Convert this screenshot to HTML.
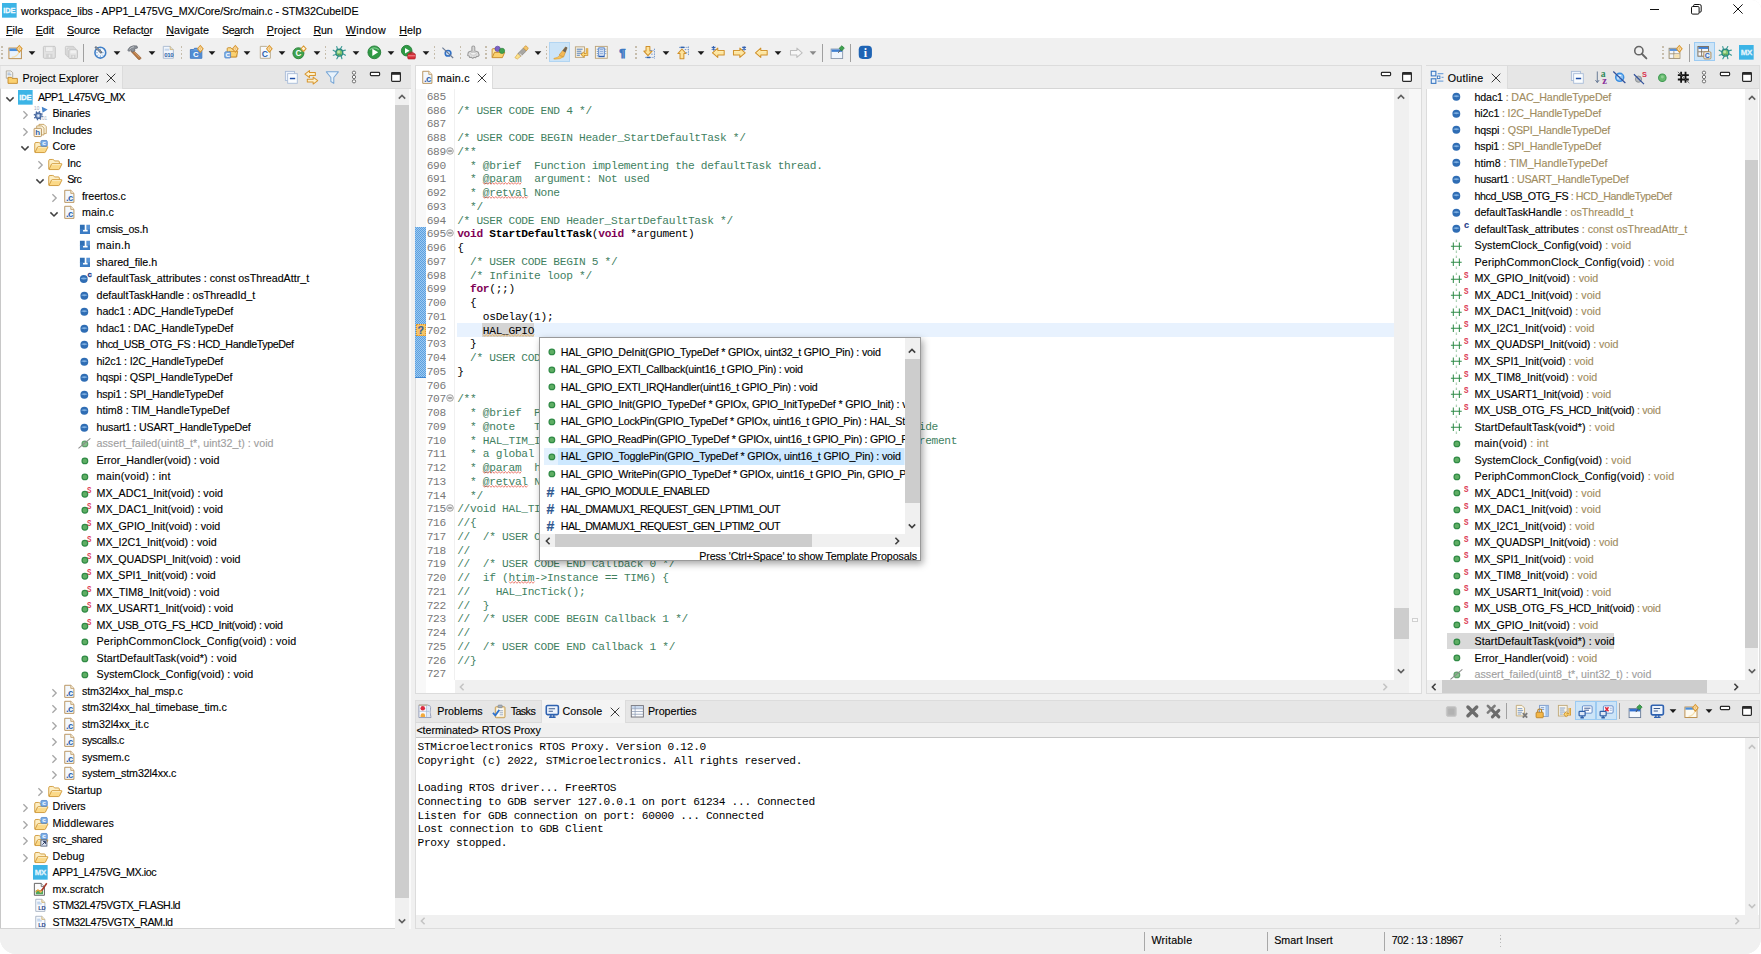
<!DOCTYPE html>
<html lang="en"><head><meta charset="utf-8"><title>workspace_libs - APP1_L475VG_MX/Core/Src/main.c - STM32CubeIDE</title>
<style>
html,body{margin:0;padding:0;background:#fff;}
body{width:1761px;height:954px;overflow:hidden;position:relative;font-family:"Liberation Sans",sans-serif;}
#win{position:absolute;left:0;top:0;width:1761px;height:954px;overflow:hidden;background:#f0f0f0;border-radius:0 9px 16px 16px;}
#win div,#win span,#win svg{position:absolute;}
#win svg{overflow:visible;}
#win span span{position:static;}
.t{font-family:"Liberation Sans",sans-serif;line-height:16px;white-space:pre;-webkit-text-stroke:0.13px currentColor;}
.m{font-family:"Liberation Mono",monospace;font-size:11.2px;letter-spacing:-0.3033px;line-height:14px;white-space:pre;color:#000;}
.m b{font-weight:bold;}
.c{color:#3f7f5f;}
.k{color:#7f0055;font-weight:bold;}
.sq{text-decoration:underline wavy #e0301e 0.8px;text-underline-offset:1.5px;}

</style></head>
<body>
<div id="win">
<div style="left:0.00px;top:0.00px;width:1761.00px;height:38.00px;background:#fff;"></div>
<svg style="left:1.97px;top:2.97px;" width="14.67" height="14.67" viewBox="0 0 16 16"><rect width="16" height="16" fill="#3cb4e6"/><text x="8" y="10.9" font-size="8.1" font-weight="bold" fill="#f2fafe" text-anchor="middle" font-family="Liberation Sans, sans-serif" letter-spacing="-0.1" stroke="#f2fafe" stroke-width="0.35">IDE</text></svg>
<span id="t0" class="t " style="left:21.10px;top:3.20px;color:#000;font-size:10.7px;letter-spacing:-0.097px;">workspace_libs - APP1_L475VG_MX/Core/Src/main.c - STM32CubeIDE</span>
<svg style="left:1649px;top:4px" width="12" height="12" viewBox="0 0 12 12"><path d="M1 5.5 H10" stroke="#111" stroke-width="1"/></svg>
<svg style="left:1690px;top:3px" width="13" height="13" viewBox="0 0 13 13"><rect x="1.5" y="3.5" width="7.6" height="7.6" rx="1.2" fill="none" stroke="#111" stroke-width="1"/><path d="M3.6 3.3 V2.6 Q3.6 1.5 4.8 1.5 H9.6 Q11.2 1.5 11.2 3.1 V8 Q11.2 9.2 10.1 9.2 H9.3" fill="none" stroke="#111" stroke-width="1"/></svg>
<svg style="left:1732.00px;top:3.40px" width="12" height="12" viewBox="-6 -6 12 12"><path d="M-4.6 -4.6 L4.6 4.6 M4.6 -4.6 L-4.6 4.6" fill="none" stroke="#111" stroke-width="1.0"/></svg>
<span id="t1" class="t " style="left:6.10px;top:22.00px;color:#000;font-size:10.7px;letter-spacing:-0.034px;text-underline-offset:1px;"><u>F</u>ile</span>
<span id="t2" class="t " style="left:35.80px;top:22.00px;color:#000;font-size:10.7px;letter-spacing:-0.109px;text-underline-offset:1px;"><u>E</u>dit</span>
<span id="t3" class="t " style="left:67.10px;top:22.00px;color:#000;font-size:10.7px;letter-spacing:-0.198px;text-underline-offset:1px;"><u>S</u>ource</span>
<span id="t4" class="t " style="left:113.10px;top:22.00px;color:#000;font-size:10.7px;letter-spacing:-0.063px;text-underline-offset:1px;">Refact<u>o</u>r</span>
<span id="t5" class="t " style="left:166.30px;top:22.00px;color:#000;font-size:10.7px;letter-spacing:0.052px;text-underline-offset:1px;"><u>N</u>avigate</span>
<span id="t6" class="t " style="left:222.10px;top:22.00px;color:#000;font-size:10.7px;letter-spacing:-0.415px;text-underline-offset:1px;">Se<u>a</u>rch</span>
<span id="t7" class="t " style="left:266.80px;top:22.00px;color:#000;font-size:10.7px;letter-spacing:0.060px;text-underline-offset:1px;"><u>P</u>roject</span>
<span id="t8" class="t " style="left:313.50px;top:22.00px;color:#000;font-size:10.7px;letter-spacing:-0.203px;text-underline-offset:1px;"><u>R</u>un</span>
<span id="t9" class="t " style="left:345.80px;top:22.00px;color:#000;font-size:10.7px;letter-spacing:0.361px;text-underline-offset:1px;"><u>W</u>indow</span>
<span id="t10" class="t " style="left:399.30px;top:22.00px;color:#000;font-size:10.7px;letter-spacing:0.054px;text-underline-offset:1px;"><u>H</u>elp</span>
<div style="left:0.00px;top:38.00px;width:1761.00px;height:27.50px;background:#f0f0f0;"></div>
<div style="left:1.40px;top:46.00px;width:1.60px;height:1.60px;background:#c6bdac;"></div>
<div style="left:1.40px;top:49.64px;width:1.60px;height:1.60px;background:#c6bdac;"></div>
<div style="left:1.40px;top:53.28px;width:1.60px;height:1.60px;background:#c6bdac;"></div>
<div style="left:1.40px;top:56.92px;width:1.60px;height:1.60px;background:#c6bdac;"></div>
<div style="left:549.00px;top:42.30px;width:21.40px;height:19.60px;background:#cce4f7;border:1px solid #b2d5f2;box-sizing:border-box;"></div>
<div style="left:1694.00px;top:42.10px;width:21.20px;height:19.40px;background:#cce4f7;border:1px solid #9ccbf2;box-sizing:border-box;"></div>
<svg style="left:8.36px;top:44.87px;" width="14.67" height="14.67" viewBox="0 0 16 16"><rect x="1" y="3.3" width="13.6" height="11.6" fill="#eaf3fc" stroke="#b98a46" stroke-width="1"/><rect x="1.5" y="3.8" width="12.6" height="2.8" fill="#4a8fdc"/><path d="M4 13.5 Q10 13 12.5 7" stroke="#f5dfae" stroke-width="1.4" fill="none"/><path d="M12.4 0.6 L15.4 4.2 L12.4 7.8 L9.4 4.2Z" fill="#fff3d6" stroke="#d9962f" stroke-width="1.1"/><path d="M12.4 2.2 V6.2 M10.9 4.2 H13.9" stroke="#f0b858" stroke-width="0.8"/></svg>
<svg style="left:42.06px;top:44.87px;" width="14.67" height="14.67" viewBox="0 0 16 16"><path d="M1.5 2.6 Q1.5 1.5 2.6 1.5 H13.4 Q14.5 1.5 14.5 2.6 V13.4 Q14.5 14.5 13.4 14.5 H2.6 Q1.5 14.5 1.5 13.4Z" fill="#e2e2e2" stroke="#c2c2c2"/><rect x="4" y="2" width="8" height="5.2" fill="#f1f1f1" stroke="#cdcdcd" stroke-width=".6"/><rect x="4.6" y="9.6" width="6.8" height="4.6" fill="#d2d2d2"/><rect x="7.4" y="10.6" width="1.6" height="2.8" fill="#efefef"/></svg>
<svg style="left:63.87px;top:44.87px;" width="14.67" height="14.67" viewBox="0 0 16 16"><rect x="1.5" y="1.5" width="9.5" height="9.5" rx="1" fill="#e6e6e6" stroke="#c6c6c6"/><rect x="3.3" y="3.3" width="9.5" height="9.5" rx="1" fill="#e6e6e6" stroke="#c6c6c6"/><rect x="5.2" y="5.2" width="9.5" height="9.5" rx="1" fill="#e2e2e2" stroke="#c2c2c2"/><rect x="7" y="5.8" width="6" height="3.4" fill="#f1f1f1"/><rect x="7.6" y="11" width="4.8" height="3.4" fill="#d0d0d0"/><rect x="9.4" y="11.6" width="1.3" height="2.2" fill="#efefef"/></svg>
<svg style="left:92.67px;top:44.87px;" width="14.67" height="14.67" viewBox="0 0 16 16"><circle cx="8" cy="8.4" r="5.9" fill="#f4f8fc" stroke="#3f7fc8" stroke-width="1.7"/><path d="M8 4 V8.4 H11.6" stroke="#7aa7d8" stroke-width="1" fill="none"/><path d="M8 12.9 V11.4 M3.6 8.4 H5 M4.9 11.6 L5.9 10.6 M11.1 11.6 L10.1 10.6" stroke="#5d92cf" stroke-width="1"/><path d="M2.4 2 L9.4 8.6" stroke="#5a6472" stroke-width="2.3"/><path d="M2.8 2.4 L8.6 7.9" stroke="#b9c4d2" stroke-width="0.9"/></svg>
<svg style="left:127.27px;top:44.87px;" width="14.67" height="14.67" viewBox="0 0 16 16"><path d="M6.2 5.2 L15 13.6 Q15.6 14.8 14.4 15.6 L12.6 15.8 L4.4 7Z" fill="#b87a44" stroke="#8a5226" stroke-width=".7"/><path d="M7 6.6 L13.6 13.4" stroke="#d9a878" stroke-width=".9"/><path d="M0.8 5.6 Q2.4 1.4 7 0.8 L10.8 1 L11.6 3.2 L8 4.4 L8.8 6 L5.6 7.8 L4.2 5.4 L2 7Z" fill="#8a8f96" stroke="#5e636a" stroke-width=".7"/><path d="M2.8 4.6 Q4.4 2.4 7.6 1.9" stroke="#c9cdd2" stroke-width=".9" fill="none"/></svg>
<svg style="left:161.36px;top:44.87px;" width="14.67" height="14.67" viewBox="0 0 16 16"><path d="M2.5 1.5 H10 L13.5 5 V14.5 H2.5Z" fill="#f1f6fc" stroke="#a9b9cf" stroke-width="1"/><path d="M10 1.5 V5 H13.5" fill="#e6dcc4" stroke="#c7a96a" stroke-width=".8"/><rect x="4" y="4" width="5" height="2.2" fill="#c5d6ec"/><text x="8.4" y="13" font-size="6.6" font-weight="bold" fill="#2d5fa8" text-anchor="middle" font-family="Liberation Sans, sans-serif" letter-spacing="-0.4">010</text></svg>
<svg style="left:188.66px;top:44.87px;" width="14.67" height="14.67" viewBox="0 0 16 16"><path d="M1.5 5 H5 L6 3.6 H9.6 L10.4 5 H14 V14.5 H1.5Z" fill="#6ea2df" stroke="#3a74bd" stroke-width="1"/><path d="M2 6 H13.5 V14 H2Z" fill="#4f8bd3"/><text x="7.4" y="13" font-size="8.4" font-weight="bold" fill="#fff" text-anchor="middle" font-family="Liberation Sans, sans-serif" >C</text><path d="M12.4 0.6 L15.4 4.2 L12.4 7.8 L9.4 4.2Z" fill="#fff3d6" stroke="#d9962f" stroke-width="1.1"/><path d="M12.4 2.2 V6.2 M10.9 4.2 H13.9" stroke="#f0b858" stroke-width="0.8"/></svg>
<svg style="left:223.66px;top:44.87px;" width="14.67" height="14.67" viewBox="0 0 16 16"><path d="M3.5 13 V4 Q3.5 3 4.5 3 H7.6 L9 4.6 H14 V13Z" fill="#fbdc8c" stroke="#c58a2a" stroke-width="1"/><path d="M3.6 13 L5.6 7 H15 L13.4 13Z" fill="#fbd170" stroke="#c58a2a" stroke-width=".9"/><rect x="0.8" y="7.4" width="6.4" height="6.8" rx="1" fill="#7eaee6" stroke="#4a80c6" stroke-width=".8"/><text x="4" y="13.2" font-size="6.8" font-weight="bold" fill="#fff" text-anchor="middle" font-family="Liberation Sans, sans-serif" >C</text><path d="M12.4 0.6 L15.4 4.2 L12.4 7.8 L9.4 4.2Z" fill="#fff3d6" stroke="#d9962f" stroke-width="1.1"/><path d="M12.4 2.2 V6.2 M10.9 4.2 H13.9" stroke="#f0b858" stroke-width="0.8"/></svg>
<svg style="left:258.37px;top:44.87px;" width="14.67" height="14.67" viewBox="0 0 16 16"><path d="M2.5 1.5 H9.5 L13.5 5.5 V14.5 H2.5Z" fill="#f5f9fe" stroke="#b9a988" stroke-width="1"/><text x="7.6" y="12.8" font-size="9.4" font-weight="bold" fill="#2f63ae" text-anchor="middle" font-family="Liberation Sans, sans-serif" >C</text><path d="M12.4 0.6 L15.4 4.2 L12.4 7.8 L9.4 4.2Z" fill="#fff3d6" stroke="#d9962f" stroke-width="1.1"/><path d="M12.4 2.2 V6.2 M10.9 4.2 H13.9" stroke="#f0b858" stroke-width="0.8"/></svg>
<svg style="left:292.27px;top:44.87px;" width="14.67" height="14.67" viewBox="0 0 16 16"><circle cx="7" cy="9" r="6" fill="#3fa24e" stroke="#2b7f3a" stroke-width="1"/><text x="7" y="12.2" font-size="9" font-weight="bold" fill="#fff" text-anchor="middle" font-family="Liberation Sans, sans-serif" >C</text><path d="M12.6 1 L15.4 4 L12.6 7 L9.8 4Z" fill="#fff3d6" stroke="#d9962f" stroke-width="1.1"/></svg>
<svg style="left:332.27px;top:44.87px;" width="14.67" height="14.67" viewBox="0 0 16 16"><path d="M10.9 9.0 L14.7 11.1 M9.7 10.9 L10.8 15.0 M7.4 11.3 L5.3 15.1 M5.5 10.1 L1.4 11.2 M5.1 7.8 L1.3 5.7 M6.3 5.9 L5.2 1.8 M8.6 5.5 L10.7 1.7 M10.5 6.7 L14.6 5.6" stroke="#3a9a94" stroke-width="1.25" fill="none" stroke-linecap="round"/><circle cx="8" cy="8.4" r="3.7" fill="#86c66e" stroke="#2a8a84" stroke-width="1.5"/><circle cx="7.2" cy="7.6" r="1.5" fill="#c4e6b0"/><path d="M6.2 10.2 Q8 11.4 9.8 10" stroke="#3a8a54" stroke-width=".8" fill="none"/></svg>
<svg style="left:366.87px;top:44.87px;" width="14.67" height="14.67" viewBox="0 0 16 16"><circle cx="8" cy="8" r="7" fill="#2f9a45" stroke="#1f7a34" stroke-width=".9"/><path d="M3 5.2 Q8 1 13 5.2" stroke="#79c98a" stroke-width="1.3" fill="none"/><path d="M5.8 4 L12.2 8 L5.8 12Z" fill="#fff"/></svg>
<svg style="left:401.27px;top:44.87px;" width="14.67" height="14.67" viewBox="0 0 16 16"><circle cx="6.2" cy="6.2" r="5.8" fill="#2f9a45" stroke="#1f7a34" stroke-width=".9"/><path d="M4.4 3.2 L9.4 6.2 L4.4 9.2Z" fill="#fff"/><rect x="7.4" y="9.4" width="8.2" height="5.8" rx="1" fill="#d8303a" stroke="#b01e28" stroke-width=".8"/><path d="M9.8 9.2 V7.9 H13.2 V9.2" fill="none" stroke="#b01e28" stroke-width="1"/><path d="M7.6 11.8 H15.4" stroke="#f5a0a6" stroke-width=".9"/></svg>
<svg style="left:440.47px;top:44.87px;" width="14.67" height="14.67" viewBox="0 0 16 16"><circle cx="8.8" cy="9" r="3.1" fill="#cfe2f8" stroke="#2f6fc4" stroke-width="1.7"/><path d="M2.6 2.8 L14.4 14.2" stroke="#6a7a94" stroke-width="1.2"/></svg>
<svg style="left:466.06px;top:44.87px;" width="14.67" height="14.67" viewBox="0 0 16 16"><path d="M2.2 9.6 Q2 7.4 5 6.8 L6.4 6.6 V2.6 Q6.4 1 8 1 Q9.6 1 9.6 2.6 V6.6 L11 6.8 Q14 7.4 13.8 9.6 L14.4 11 L13 12.6 L11.6 12.2 L10.6 13.8 L8.8 13.4 L7.4 14.6 L5.8 13.4 L4 13.6 L3.4 12 L1.8 11.4Z" fill="#e2e2e2" stroke="#9c9c9c" stroke-width="1.15" stroke-linejoin="round"/><path d="M6.4 6.6 Q8 7.6 9.6 6.6 M7.4 2.4 V6.4" stroke="#b4b4b4" stroke-width=".8" fill="none"/><ellipse cx="8" cy="9.6" rx="3.4" ry="1.5" fill="#f2f2f2" stroke="#b4b4b4" stroke-width=".7"/></svg>
<svg style="left:491.27px;top:44.87px;" width="14.67" height="14.67" viewBox="0 0 16 16"><path d="M1.2 13.6 V5 Q1.2 4 2.2 4 H5.2 L6.6 5.6 H12.4 V8" fill="#fbe6a8" stroke="#c58a2a" stroke-width="1"/><path d="M1.3 13.8 L3.8 8 H15 L12.4 13.8Z" fill="#fbd170" stroke="#c58a2a" stroke-width="1" stroke-linejoin="round"/><circle cx="7.2" cy="4.2" r="2.9" fill="#7b62c6" stroke="#56409e" stroke-width=".7"/><circle cx="12" cy="6.4" r="2.9" fill="#3fa24e" stroke="#2b7f3a" stroke-width=".7"/></svg>
<svg style="left:513.66px;top:44.87px;" width="14.67" height="14.67" viewBox="0 0 16 16"><path d="M1 13.8 L3.6 15.4 L7.6 12 L4.6 9Z" fill="#fbe18c" stroke="#d9a63a" stroke-width=".7"/><path d="M4.4 9.2 L10.4 3.2 L13.6 6.4 L7.6 12.2Z" fill="#a8a6a2" stroke="#7d7a76" stroke-width=".7"/><path d="M10.2 3.2 L12.2 1.2 Q13 .6 13.8 1.4 L15.2 3 Q15.8 3.8 15 4.6 L13.4 6.4Z" fill="#f3c56a" stroke="#c58a2a" stroke-width=".7"/><path d="M6 9.4 L8.8 12" stroke="#ded9d0" stroke-width="1.2"/></svg>
<svg style="left:552.66px;top:44.87px;" width="14.67" height="14.67" viewBox="0 0 16 16"><path d="M1 14.6 Q5 14 7.4 11.6 L11.2 13 Q8 15.8 1 15.4Z" fill="#f9c55c" stroke="#d99a2e" stroke-width=".6"/><path d="M6.6 11 L13.6 2.2 L15.4 3.2 L11.6 13Z" fill="#f3b956" stroke="#c98a26" stroke-width=".6"/><path d="M10.4 6.2 L13.8 1.8 L15.6 2.8 L13.6 8.2Z" fill="#6d6358"/></svg>
<svg style="left:574.06px;top:44.87px;" width="14.67" height="14.67" viewBox="0 0 16 16"><rect x="1.5" y="2" width="10" height="11.5" fill="#f6f1e4" stroke="#b9a27a" stroke-width="1"/><path d="M3 4.6 H9.4 M3 6.8 H8 M3 9 H9.4 M3 11.2 H6.4" stroke="#4a78b8" stroke-width="1"/><path d="M14.2 3.6 V10.4 H9.4 M11.4 8 L9 10.4 L11.4 12.8" fill="none" stroke="#c98a26" stroke-width="2.6"/><path d="M14.2 3.6 V10.4 H9.4 M11.4 8 L9 10.4 L11.4 12.8" fill="none" stroke="#fbd878" stroke-width="1.1"/></svg>
<svg style="left:594.06px;top:44.87px;" width="14.67" height="14.67" viewBox="0 0 16 16"><rect x="1.5" y="1.5" width="13" height="13" fill="#f8f5ec" stroke="#b9a27a" stroke-width="1"/><rect x="5.2" y="3.2" width="6" height="9.6" fill="#f4f8fe" stroke="#3f74c4" stroke-width="1"/><path d="M3 4.6 H4.4 M3 7 H4.4 M3 9.4 H4.4 M3 11.8 H4.4 M12.2 4.6 H13.4 M12.2 7 H13.4 M12.2 9.4 H13.4 M6.4 5.2 H10 M6.4 7.4 H10 M6.4 9.6 H10" stroke="#5a86c6" stroke-width=".9"/><path d="M5.4 12.4 H11" stroke="#2f5fb0" stroke-width="1.4"/></svg>
<svg style="left:614.96px;top:44.87px;" width="14.67" height="14.67" viewBox="0 0 16 16"><text x="8" y="12.6" font-size="12.4" font-weight="bold" fill="#3b78c2" text-anchor="middle" font-family="Liberation Sans, sans-serif" stroke="#3b78c2" stroke-width="0.7">¶</text></svg>
<svg style="left:641.66px;top:44.87px;" width="14.67" height="14.67" viewBox="0 0 16 16"><path d="M4.4 1.6 H8.6 V6.6 H11 L6.5 11.6 L2 6.6 H4.4Z" fill="#fde29a" stroke="#d0902a" stroke-width="1.1" stroke-linejoin="round"/><path d="M13.6 4 V15 M9 6 H12.6 M10 10 H12.6 M3.4 13.6 H12.6" stroke="#5a86c6" stroke-width=".9" stroke-dasharray="1.6 1"/><path d="M5 13.6 H9" stroke="#2f63ae" stroke-width="1.6"/></svg>
<svg style="left:676.26px;top:44.87px;" width="14.67" height="14.67" viewBox="0 0 16 16"><path d="M4.4 15 H8.6 V9.4 H11 L6.5 4.4 L2 9.4 H4.4Z" fill="#fde29a" stroke="#d0902a" stroke-width="1.1" stroke-linejoin="round"/><path d="M13.6 1.6 V12 M9.6 5 H12.6 M10.6 8.4 H12.6 M3.4 2.6 H12.6" stroke="#5a86c6" stroke-width=".9" stroke-dasharray="1.6 1"/><path d="M5 2.6 H9" stroke="#2f63ae" stroke-width="1.6"/></svg>
<svg style="left:711.16px;top:44.87px;" width="14.67" height="14.67" viewBox="0 0 16 16"><path d="M7.4 3.4 V6 H14.4 V11 H7.4 V13.6 L1.6 8.5Z" fill="#fde6a2" stroke="#d0902a" stroke-width="1.1" stroke-linejoin="round"/><path d="M7 5.6 L3.6 8.4 M8 7 H13.4" stroke="#fdeeb8" stroke-width=".9" fill="none"/><path d="M2.8 1.2 V6 M0.8 2.2 L4.8 5 M4.8 2.2 L0.8 5" stroke="#2f5fb0" stroke-width="1.1"/></svg>
<svg style="left:731.66px;top:44.87px;" width="14.67" height="14.67" viewBox="0 0 16 16"><path d="M8.6 3.4 V6 H1.6 V11 H8.6 V13.6 L14.4 8.5Z" fill="#fde6a2" stroke="#d0902a" stroke-width="1.1" stroke-linejoin="round"/><path d="M2.6 7 H9" stroke="#fdeeb8" stroke-width=".9" fill="none"/><path d="M13.2 1.2 V6 M11.2 2.2 L15.2 5 M15.2 2.2 L11.2 5" stroke="#2f5fb0" stroke-width="1.1"/></svg>
<svg style="left:753.87px;top:44.87px;" width="14.67" height="14.67" viewBox="0 0 16 16"><path d="M7.4 3.4 V6 H14.4 V11 H7.4 V13.6 L1.6 8.5Z" fill="#fde6a2" stroke="#d0902a" stroke-width="1.1" stroke-linejoin="round"/><path d="M7 5.6 L3.6 8.4 M8 7 H13.4" stroke="#fdeeb8" stroke-width=".9" fill="none"/></svg>
<svg style="left:788.87px;top:44.87px;" width="14.67" height="14.67" viewBox="0 0 16 16"><path d="M8.6 3.4 V6 H1.6 V11 H8.6 V13.6 L14.4 8.5Z" fill="#f7f7f7" stroke="#bdbdbd" stroke-width="1.1" stroke-linejoin="round"/></svg>
<svg style="left:829.76px;top:44.87px;" width="14.67" height="14.67" viewBox="0 0 16 16"><rect x="1.2" y="4.4" width="12.6" height="10.4" fill="#eef5fd" stroke="#8a98ac" stroke-width="1"/><rect x="1.7" y="4.9" width="11.6" height="2.6" fill="#3f7fd0"/><path d="M9 8.6 L11.6 5.2" stroke="#5a5a5a" stroke-width="1"/><path d="M10 3.6 L13 0.8 L15.6 3.4 L12.8 6.4Z" fill="#3fa24e" stroke="#237a36" stroke-width=".8"/></svg>
<svg style="left:858.46px;top:44.87px;" width="14.67" height="14.67" viewBox="0 0 16 16"><rect x="0.8" y="0.8" width="14.4" height="14.4" rx="4.2" fill="#1f64b4"/><text x="8" y="12.6" font-size="13" font-weight="bold" fill="#fff" text-anchor="middle" font-family="Liberation Serif, serif" >i</text></svg>
<svg style="left:1632.66px;top:44.87px;" width="14.67" height="14.67" viewBox="0 0 16 16"><circle cx="6.4" cy="6.2" r="4.5" fill="none" stroke="#666" stroke-width="1.7"/><path d="M9.6 9.6 L14.6 14.6" stroke="#666" stroke-width="2.1" stroke-linecap="round"/></svg>
<svg style="left:1667.87px;top:44.87px;" width="14.67" height="14.67" viewBox="0 0 16 16"><rect x="1.2" y="3.6" width="11.8" height="11" fill="#f4f6fa" stroke="#9a8a6a" stroke-width="1"/><rect x="1.7" y="4.1" width="10.8" height="2.4" fill="#5a93dc"/><path d="M1.6 9.6 H12.6 M6.4 6.6 V14.4" stroke="#9a8a6a" stroke-width=".9"/><rect x="7" y="10.2" width="5.4" height="3.8" fill="#f8e2b0"/><path d="M12.4 0.6 L15.4 4.2 L12.4 7.8 L9.4 4.2Z" fill="#fff3d6" stroke="#d9962f" stroke-width="1.1"/><path d="M12.4 2.2 V6.2 M10.9 4.2 H13.9" stroke="#f0b858" stroke-width="0.8"/></svg>
<svg style="left:1697.26px;top:44.87px;" width="14.67" height="14.67" viewBox="0 0 16 16"><rect x="1" y="1.6" width="11.6" height="10.6" fill="#f4f6fa" stroke="#7a6a54" stroke-width="1"/><rect x="1.5" y="2.1" width="10.6" height="2.2" fill="#3f7fd0"/><path d="M1.4 7.4 H12.2 M5 4.4 V12" stroke="#7a6a54" stroke-width=".9"/><rect x="7.4" y="7.4" width="7.8" height="7.8" rx="1.2" fill="#e4ecf8" stroke="#b08a4a" stroke-width="1"/><text x="11.3" y="14.2" font-size="7.6" font-weight="bold" fill="#2f63ae" text-anchor="middle" font-family="Liberation Sans, sans-serif" >C</text></svg>
<svg style="left:1718.46px;top:44.87px;" width="14.67" height="14.67" viewBox="0 0 16 16"><path d="M10.9 9.0 L14.7 11.1 M9.7 10.9 L10.8 15.0 M7.4 11.3 L5.3 15.1 M5.5 10.1 L1.4 11.2 M5.1 7.8 L1.3 5.7 M6.3 5.9 L5.2 1.8 M8.6 5.5 L10.7 1.7 M10.5 6.7 L14.6 5.6" stroke="#3a9a94" stroke-width="1.25" fill="none" stroke-linecap="round"/><circle cx="8" cy="8.4" r="3.7" fill="#86c66e" stroke="#2a8a84" stroke-width="1.5"/><circle cx="7.2" cy="7.6" r="1.5" fill="#c4e6b0"/><path d="M6.2 10.2 Q8 11.4 9.8 10" stroke="#3a8a54" stroke-width=".8" fill="none"/></svg>
<svg style="left:1739.16px;top:44.87px;" width="14.67" height="14.67" viewBox="0 0 16 16"><rect width="16" height="16" fill="#3cb4e6"/><text x="8" y="11.2" font-size="8.6" font-weight="bold" fill="#e4f4fc" text-anchor="middle" font-family="Liberation Sans, sans-serif" letter-spacing="-0.3" stroke="#e4f4fc" stroke-width="0.3">MX</text></svg>
<svg style="left:28.40px;top:49.50px" width="8" height="6" viewBox="0 0 8 6"><path d="M0.6 1.2 L7.4 1.2 L4 4.9 Z" fill="#1a1a1a"/></svg>
<svg style="left:112.70px;top:49.50px" width="8" height="6" viewBox="0 0 8 6"><path d="M0.6 1.2 L7.4 1.2 L4 4.9 Z" fill="#1a1a1a"/></svg>
<svg style="left:147.60px;top:49.50px" width="8" height="6" viewBox="0 0 8 6"><path d="M0.6 1.2 L7.4 1.2 L4 4.9 Z" fill="#1a1a1a"/></svg>
<svg style="left:208.00px;top:49.50px" width="8" height="6" viewBox="0 0 8 6"><path d="M0.6 1.2 L7.4 1.2 L4 4.9 Z" fill="#1a1a1a"/></svg>
<svg style="left:243.00px;top:49.50px" width="8" height="6" viewBox="0 0 8 6"><path d="M0.6 1.2 L7.4 1.2 L4 4.9 Z" fill="#1a1a1a"/></svg>
<svg style="left:278.30px;top:49.50px" width="8" height="6" viewBox="0 0 8 6"><path d="M0.6 1.2 L7.4 1.2 L4 4.9 Z" fill="#1a1a1a"/></svg>
<svg style="left:312.60px;top:49.50px" width="8" height="6" viewBox="0 0 8 6"><path d="M0.6 1.2 L7.4 1.2 L4 4.9 Z" fill="#1a1a1a"/></svg>
<svg style="left:352.00px;top:49.50px" width="8" height="6" viewBox="0 0 8 6"><path d="M0.6 1.2 L7.4 1.2 L4 4.9 Z" fill="#1a1a1a"/></svg>
<svg style="left:387.00px;top:49.50px" width="8" height="6" viewBox="0 0 8 6"><path d="M0.6 1.2 L7.4 1.2 L4 4.9 Z" fill="#1a1a1a"/></svg>
<svg style="left:421.70px;top:49.50px" width="8" height="6" viewBox="0 0 8 6"><path d="M0.6 1.2 L7.4 1.2 L4 4.9 Z" fill="#1a1a1a"/></svg>
<svg style="left:533.80px;top:49.50px" width="8" height="6" viewBox="0 0 8 6"><path d="M0.6 1.2 L7.4 1.2 L4 4.9 Z" fill="#1a1a1a"/></svg>
<svg style="left:662.30px;top:49.50px" width="8" height="6" viewBox="0 0 8 6"><path d="M0.6 1.2 L7.4 1.2 L4 4.9 Z" fill="#1a1a1a"/></svg>
<svg style="left:697.20px;top:49.50px" width="8" height="6" viewBox="0 0 8 6"><path d="M0.6 1.2 L7.4 1.2 L4 4.9 Z" fill="#1a1a1a"/></svg>
<svg style="left:774.00px;top:49.50px" width="8" height="6" viewBox="0 0 8 6"><path d="M0.6 1.2 L7.4 1.2 L4 4.9 Z" fill="#1a1a1a"/></svg>
<svg style="left:809.10px;top:49.50px" width="8" height="6" viewBox="0 0 8 6"><path d="M0.6 1.2 L7.4 1.2 L4 4.9 Z" fill="#8a8a8a"/></svg>
<div style="left:83.00px;top:43.50px;width:1.00px;height:18.00px;background:#a0a0a0;"></div>
<div style="left:821.70px;top:43.50px;width:1.00px;height:18.00px;background:#a0a0a0;"></div>
<div style="left:849.70px;top:43.50px;width:1.00px;height:18.00px;background:#a0a0a0;"></div>
<div style="left:1688.70px;top:43.50px;width:1.00px;height:18.00px;background:#a0a0a0;"></div>
<div style="left:180.60px;top:46.00px;width:1.60px;height:1.60px;background:#c6bdac;"></div>
<div style="left:180.60px;top:49.64px;width:1.60px;height:1.60px;background:#c6bdac;"></div>
<div style="left:180.60px;top:53.28px;width:1.60px;height:1.60px;background:#c6bdac;"></div>
<div style="left:180.60px;top:56.92px;width:1.60px;height:1.60px;background:#c6bdac;"></div>
<div style="left:324.90px;top:46.00px;width:1.60px;height:1.60px;background:#c6bdac;"></div>
<div style="left:324.90px;top:49.64px;width:1.60px;height:1.60px;background:#c6bdac;"></div>
<div style="left:324.90px;top:53.28px;width:1.60px;height:1.60px;background:#c6bdac;"></div>
<div style="left:324.90px;top:56.92px;width:1.60px;height:1.60px;background:#c6bdac;"></div>
<div style="left:433.90px;top:46.00px;width:1.60px;height:1.60px;background:#c6bdac;"></div>
<div style="left:433.90px;top:49.64px;width:1.60px;height:1.60px;background:#c6bdac;"></div>
<div style="left:433.90px;top:53.28px;width:1.60px;height:1.60px;background:#c6bdac;"></div>
<div style="left:433.90px;top:56.92px;width:1.60px;height:1.60px;background:#c6bdac;"></div>
<div style="left:459.80px;top:46.00px;width:1.60px;height:1.60px;background:#c6bdac;"></div>
<div style="left:459.80px;top:49.64px;width:1.60px;height:1.60px;background:#c6bdac;"></div>
<div style="left:459.80px;top:53.28px;width:1.60px;height:1.60px;background:#c6bdac;"></div>
<div style="left:459.80px;top:56.92px;width:1.60px;height:1.60px;background:#c6bdac;"></div>
<div style="left:485.20px;top:46.00px;width:1.60px;height:1.60px;background:#c6bdac;"></div>
<div style="left:485.20px;top:49.64px;width:1.60px;height:1.60px;background:#c6bdac;"></div>
<div style="left:485.20px;top:53.28px;width:1.60px;height:1.60px;background:#c6bdac;"></div>
<div style="left:485.20px;top:56.92px;width:1.60px;height:1.60px;background:#c6bdac;"></div>
<div style="left:545.80px;top:46.00px;width:1.60px;height:1.60px;background:#c6bdac;"></div>
<div style="left:545.80px;top:49.64px;width:1.60px;height:1.60px;background:#c6bdac;"></div>
<div style="left:545.80px;top:53.28px;width:1.60px;height:1.60px;background:#c6bdac;"></div>
<div style="left:545.80px;top:56.92px;width:1.60px;height:1.60px;background:#c6bdac;"></div>
<div style="left:635.00px;top:46.00px;width:1.60px;height:1.60px;background:#c6bdac;"></div>
<div style="left:635.00px;top:49.64px;width:1.60px;height:1.60px;background:#c6bdac;"></div>
<div style="left:635.00px;top:53.28px;width:1.60px;height:1.60px;background:#c6bdac;"></div>
<div style="left:635.00px;top:56.92px;width:1.60px;height:1.60px;background:#c6bdac;"></div>
<div style="left:1662.10px;top:46.00px;width:1.60px;height:1.60px;background:#c6bdac;"></div>
<div style="left:1662.10px;top:49.64px;width:1.60px;height:1.60px;background:#c6bdac;"></div>
<div style="left:1662.10px;top:53.28px;width:1.60px;height:1.60px;background:#c6bdac;"></div>
<div style="left:1662.10px;top:56.92px;width:1.60px;height:1.60px;background:#c6bdac;"></div>
<div style="left:0.00px;top:65.40px;width:410.80px;height:863.60px;background:#fff;"></div>
<div style="left:0.00px;top:65.40px;width:410.80px;height:23.60px;background:#e6e6e6;border-top:1px solid #dcdcdc;border-bottom:1px solid #dadada;box-sizing:border-box;"></div>
<div style="left:0.80px;top:66.00px;width:122.30px;height:23.00px;background:#f0f0f0;border-right:1px solid #dcdcdc;box-sizing:border-box;"></div>
<div style="left:0.00px;top:89.00px;width:1.00px;height:840.00px;background:#c8c8c8;"></div>
<div style="left:0.00px;top:928.00px;width:410.80px;height:1.00px;background:#d4d4d4;"></div>
<svg style="left:3.86px;top:70.07px;" width="14.67" height="14.67" viewBox="0 0 16 16"><path d="M2.5 1 H7.5 L9.5 3 V9 H2.5Z" fill="#f4f4f0" stroke="#a8a294" stroke-width=".9"/><path d="M3.8 3.4 H7 M3.8 5.2 H8" stroke="#7a9ac8" stroke-width=".8"/><path d="M4.4 14.6 V8 H8 L9 9.2 H14.6 V14.6Z" fill="#fbd170" stroke="#c58a2a" stroke-width="1" stroke-linejoin="round"/></svg>
<span id="t11" class="t " style="left:22.60px;top:69.60px;color:#000;font-size:10.7px;letter-spacing:-0.008px;">Project Explorer</span>
<svg style="left:105.40px;top:72.30px" width="12" height="12" viewBox="-6 -6 12 12"><path d="M-4.3 -4.3 L4.3 4.3 M4.3 -4.3 L-4.3 4.3" fill="none" stroke="#3a3a3a" stroke-width="1.0"/></svg>
<svg style="left:283.87px;top:69.97px;" width="14.67" height="14.67" viewBox="0 0 16 16"><rect x="1.5" y="1.5" width="10" height="10" fill="#eef3fb" stroke="#a9bcd8" stroke-width="1"/><rect x="4" y="4" width="10.5" height="10.5" fill="#fbfdff" stroke="#a9bcd8" stroke-width="1"/><path d="M6.4 9.3 H12.2" stroke="#1f4fa8" stroke-width="1.6"/></svg>
<svg style="left:304.47px;top:69.97px;" width="14.67" height="14.67" viewBox="0 0 16 16"><path d="M6 0.6 V2.8 H12.4 V6 H6 V8.2 L1 4.4Z" fill="#fdf0cc" stroke="#d8962e" stroke-width="1.1" stroke-linejoin="round"/><path d="M10 7.8 V10 H3.6 V13.2 H10 V15.4 L15 11.6Z" fill="#fdf0cc" stroke="#d8962e" stroke-width="1.1" stroke-linejoin="round"/></svg>
<svg style="left:324.97px;top:69.97px;" width="14.67" height="14.67" viewBox="0 0 16 16"><path d="M1.4 2 H14.6 L9.6 8.2 V14.6 L6.4 12.6 V8.2Z" fill="#e9f3fc" stroke="#79a7d6" stroke-width="1.1" stroke-linejoin="round"/></svg>
<svg style="left:351.00px;top:70.20px" width="6" height="14" viewBox="-3 -7 6 14"><circle cx="0" cy="-4.3" r="1.65" fill="#fff" stroke="#5a5a5a" stroke-width="0.85"/><circle cx="0" cy="0" r="1.65" fill="#fff" stroke="#5a5a5a" stroke-width="0.85"/><circle cx="0" cy="4.3" r="1.65" fill="#fff" stroke="#5a5a5a" stroke-width="0.85"/></svg>
<svg style="left:368.80px;top:70.30px" width="12" height="8" viewBox="-6 -4 12 8"><rect x="-4.6" y="-1.6" width="9.2" height="3.2" rx="0.8" fill="#fff" stroke="#2a2a2a" stroke-width="1.2"/></svg>
<svg style="left:390.00px;top:71.00px" width="12" height="12" viewBox="-6 -6 12 12"><rect x="-4.4" y="-4.4" width="8.8" height="8.8" rx="0.8" fill="#fff" stroke="#2a2a2a" stroke-width="1.2"/><rect x="-4.4" y="-4.6" width="8.8" height="2.4" fill="#2a2a2a"/></svg>
<div style="left:395.30px;top:89.00px;width:13.50px;height:840.00px;background:#f0f0f0;"></div>
<div style="left:395.30px;top:105.00px;width:13.50px;height:792.70px;background:#cdcdcd;"></div>
<svg style="left:396.00px;top:91.00px" width="12" height="12" viewBox="-6 -6 12 12"><path d="M-3.2 1.6 L0 -1.6 L3.2 1.6" fill="none" stroke="#606060" stroke-width="1.6"/></svg>
<svg style="left:396.00px;top:915.40px" width="12" height="12" viewBox="-6 -6 12 12"><path d="M-3.2 -1.6 L0 1.6 L3.2 -1.6" fill="none" stroke="#606060" stroke-width="1.6"/></svg>
<div style="left:408.80px;top:89.00px;width:2.00px;height:840.00px;background:#fafafa;"></div>
<div style="left:1px;top:89.00px;width:394px;height:840.00px;overflow:hidden;">
<svg style="left:3.40px;top:3.50px" width="12" height="12" viewBox="-6 -6 12 12"><path d="M-3.6 -1.6 L0 2 L3.6 -1.6" fill="none" stroke="#404040" stroke-width="1.5"/></svg>
<svg style="left:16.86px;top:0.76px;" width="14.67" height="14.67" viewBox="0 0 16 16"><rect width="16" height="16" fill="#3cb4e6"/><text x="8" y="10.9" font-size="8.1" font-weight="bold" fill="#f2fafe" text-anchor="middle" font-family="Liberation Sans, sans-serif" letter-spacing="-0.1" stroke="#f2fafe" stroke-width="0.35">IDE</text></svg>
<span id="t12" class="t " style="left:36.90px;top:-0.50px;color:#000;font-size:10.7px;letter-spacing:-0.528px;">APP1_L475VG_MX</span>
<svg style="left:18.07px;top:20.00px" width="12" height="12" viewBox="-6 -6 12 12"><path d="M-1.6 -3.8 L2.2 0 L-1.6 3.8" fill="none" stroke="#a6a6a6" stroke-width="1.3"/></svg>
<svg style="left:31.53px;top:17.26px;" width="14.67" height="14.67" viewBox="0 0 16 16"><circle cx="5.8" cy="10.6" r="4.3" fill="none" stroke="#47689f" stroke-width="1.6" stroke-dasharray="1.5 1.88"/><circle cx="5.8" cy="10.6" r="2.9" fill="#9fb6da" stroke="#47689f" stroke-width="1.5"/><circle cx="5.8" cy="10.6" r="1" fill="#eef3fa"/><path d="M9.6 0.8 L16 3.7 L10.4 7.4Z" fill="#4a86cc"/><text x="4" y="4.8" font-size="5" font-weight="normal" fill="#9aa6b6" text-anchor="middle" font-family="Liberation Sans, sans-serif" >10</text><text x="12.6" y="14.8" font-size="5" font-weight="normal" fill="#a6b0be" text-anchor="middle" font-family="Liberation Sans, sans-serif" >01</text></svg>
<span id="t13" class="t " style="left:51.57px;top:16.00px;color:#000;font-size:10.7px;letter-spacing:-0.130px;">Binaries</span>
<svg style="left:18.07px;top:36.50px" width="12" height="12" viewBox="-6 -6 12 12"><path d="M-1.6 -3.8 L2.2 0 L-1.6 3.8" fill="none" stroke="#a6a6a6" stroke-width="1.3"/></svg>
<svg style="left:31.53px;top:33.76px;" width="14.67" height="14.67" viewBox="0 0 16 16"><path d="M6.5 1.5 H12 L14.5 4 V11.5 H6.5Z" fill="#fbf3de" stroke="#c09a5a" stroke-width=".9"/><path d="M4 3.2 H9.6 L12 5.6 V13 H4Z" fill="#fbf3de" stroke="#c09a5a" stroke-width=".9"/><rect x="1.2" y="5.8" width="8" height="9" rx="0.8" fill="#fdf6e6" stroke="#b58d55" stroke-width="1"/><text x="5.2" y="13.4" font-size="8.6" font-weight="bold" fill="#2f63ae" text-anchor="middle" font-family="Liberation Sans, sans-serif" >h</text></svg>
<span id="t14" class="t " style="left:51.57px;top:32.50px;color:#000;font-size:10.7px;letter-spacing:-0.049px;">Includes</span>
<svg style="left:18.07px;top:53.00px" width="12" height="12" viewBox="-6 -6 12 12"><path d="M-3.6 -1.6 L0 2 L3.6 -1.6" fill="none" stroke="#404040" stroke-width="1.5"/></svg>
<svg style="left:31.53px;top:50.26px;" width="14.67" height="14.67" viewBox="0 0 16 16"><g transform="translate(0.9,0.2)"><path d="M1 14 V5 Q1 3.6 2.4 3.6 H5.4 Q6.2 3.6 6.8 4.4 L7.4 5.2 H11.4 Q12.6 5.2 12.6 6.4 V8.2" fill="#fdeec4" stroke="#cf9838" stroke-width="1"/><path d="M1.2 14.6 L4 8.6 Q4.2 8.2 4.8 8.2 H15 Q15.6 8.2 15.3 8.8 L12.6 14.2 Q12.4 14.6 11.8 14.6Z" fill="#fbd988" stroke="#cf9838" stroke-width="1" stroke-linejoin="round"/><path d="M4.6 9.2 H14.2" stroke="#fef3d2" stroke-width=".9"/></g><rect x="8.6" y="1.6" width="7" height="6.4" rx="1.3" fill="#7fb0e8" stroke="#4a80c6" stroke-width=".8"/><text x="12.1" y="7.0" font-size="6.8" font-weight="bold" fill="#fff" text-anchor="middle" font-family="Liberation Sans, sans-serif" >c</text></svg>
<span id="t15" class="t " style="left:51.57px;top:49.00px;color:#000;font-size:10.7px;letter-spacing:-0.064px;">Core</span>
<svg style="left:32.73px;top:69.50px" width="12" height="12" viewBox="-6 -6 12 12"><path d="M-1.6 -3.8 L2.2 0 L-1.6 3.8" fill="none" stroke="#a6a6a6" stroke-width="1.3"/></svg>
<svg style="left:46.20px;top:66.77px;" width="14.67" height="14.67" viewBox="0 0 16 16"><g transform="translate(0.9,0.2)"><path d="M1 14 V5 Q1 3.6 2.4 3.6 H5.4 Q6.2 3.6 6.8 4.4 L7.4 5.2 H11.4 Q12.6 5.2 12.6 6.4 V8.2" fill="#fdeec4" stroke="#cf9838" stroke-width="1"/><path d="M1.2 14.6 L4 8.6 Q4.2 8.2 4.8 8.2 H15 Q15.6 8.2 15.3 8.8 L12.6 14.2 Q12.4 14.6 11.8 14.6Z" fill="#fbd988" stroke="#cf9838" stroke-width="1" stroke-linejoin="round"/><path d="M4.6 9.2 H14.2" stroke="#fef3d2" stroke-width=".9"/></g></svg>
<span id="t16" class="t " style="left:66.23px;top:65.50px;color:#000;font-size:10.7px;letter-spacing:-0.172px;">Inc</span>
<svg style="left:32.73px;top:86.00px" width="12" height="12" viewBox="-6 -6 12 12"><path d="M-3.6 -1.6 L0 2 L3.6 -1.6" fill="none" stroke="#404040" stroke-width="1.5"/></svg>
<svg style="left:46.20px;top:83.27px;" width="14.67" height="14.67" viewBox="0 0 16 16"><g transform="translate(0.9,0.2)"><path d="M1 14 V5 Q1 3.6 2.4 3.6 H5.4 Q6.2 3.6 6.8 4.4 L7.4 5.2 H11.4 Q12.6 5.2 12.6 6.4 V8.2" fill="#fdeec4" stroke="#cf9838" stroke-width="1"/><path d="M1.2 14.6 L4 8.6 Q4.2 8.2 4.8 8.2 H15 Q15.6 8.2 15.3 8.8 L12.6 14.2 Q12.4 14.6 11.8 14.6Z" fill="#fbd988" stroke="#cf9838" stroke-width="1" stroke-linejoin="round"/><path d="M4.6 9.2 H14.2" stroke="#fef3d2" stroke-width=".9"/></g></svg>
<span id="t17" class="t " style="left:66.23px;top:82.00px;color:#000;font-size:10.7px;letter-spacing:-0.760px;">Src</span>
<svg style="left:47.40px;top:102.50px" width="12" height="12" viewBox="-6 -6 12 12"><path d="M-1.6 -3.8 L2.2 0 L-1.6 3.8" fill="none" stroke="#a6a6a6" stroke-width="1.3"/></svg>
<svg style="left:60.87px;top:99.77px;" width="14.67" height="14.67" viewBox="0 0 16 16"><path d="M3 1.4 H9.6 L13 4.8 V14.6 H3Z" fill="#f3f8fd" stroke="#b58d55" stroke-width="1"/><path d="M9.6 1.4 V4.8 H13" fill="#f7ecd4" stroke="#b58d55" stroke-width=".8"/><text x="7.9" y="12.8" font-size="10.4" font-weight="bold" fill="#2f63ae" text-anchor="middle" font-family="Liberation Sans, sans-serif" letter-spacing="-0.7">.c</text></svg>
<span id="t18" class="t " style="left:80.90px;top:98.50px;color:#000;font-size:10.7px;letter-spacing:-0.055px;">freertos.c</span>
<svg style="left:47.40px;top:119.00px" width="12" height="12" viewBox="-6 -6 12 12"><path d="M-3.6 -1.6 L0 2 L3.6 -1.6" fill="none" stroke="#404040" stroke-width="1.5"/></svg>
<svg style="left:60.87px;top:116.27px;" width="14.67" height="14.67" viewBox="0 0 16 16"><path d="M3 1.4 H9.6 L13 4.8 V14.6 H3Z" fill="#f3f8fd" stroke="#b58d55" stroke-width="1"/><path d="M9.6 1.4 V4.8 H13" fill="#f7ecd4" stroke="#b58d55" stroke-width=".8"/><text x="7.9" y="12.8" font-size="10.4" font-weight="bold" fill="#2f63ae" text-anchor="middle" font-family="Liberation Sans, sans-serif" letter-spacing="-0.7">.c</text></svg>
<span id="t19" class="t " style="left:80.90px;top:115.00px;color:#000;font-size:10.7px;letter-spacing:0.100px;">main.c</span>
<svg style="left:75.53px;top:132.76px;" width="14.67" height="14.67" viewBox="0 0 16 16"><rect x="3.2" y="3" width="5.2" height="5.6" fill="#2f6fb5"/><rect x="10.2" y="3" width="4" height="5.6" fill="#5a95d6"/><path d="M3.2 8 V13 H14.2 V8 H11.6 V10.4 H6.6 V8Z" fill="#3b7cc4"/></svg>
<span id="t20" class="t " style="left:95.57px;top:131.50px;color:#000;font-size:10.7px;letter-spacing:-0.214px;">cmsis_os.h</span>
<svg style="left:75.53px;top:149.26px;" width="14.67" height="14.67" viewBox="0 0 16 16"><rect x="3.2" y="3" width="5.2" height="5.6" fill="#2f6fb5"/><rect x="10.2" y="3" width="4" height="5.6" fill="#5a95d6"/><path d="M3.2 8 V13 H14.2 V8 H11.6 V10.4 H6.6 V8Z" fill="#3b7cc4"/></svg>
<span id="t21" class="t " style="left:95.57px;top:148.00px;color:#000;font-size:10.7px;letter-spacing:0.304px;">main.h</span>
<svg style="left:75.53px;top:165.77px;" width="14.67" height="14.67" viewBox="0 0 16 16"><rect x="3.2" y="3" width="5.2" height="5.6" fill="#2f6fb5"/><rect x="10.2" y="3" width="4" height="5.6" fill="#5a95d6"/><path d="M3.2 8 V13 H14.2 V8 H11.6 V10.4 H6.6 V8Z" fill="#3b7cc4"/></svg>
<span id="t22" class="t " style="left:95.57px;top:164.50px;color:#000;font-size:10.7px;letter-spacing:-0.054px;">shared_file.h</span>
<svg style="left:75.53px;top:182.27px;" width="14.67" height="14.67" viewBox="0 0 16 16"><circle cx="7.4" cy="8.8" r="4.3" fill="#2f6db4"/><path d="M3.8000000000000003 8.4 Q7.4 5.800000000000001 11.0 8.4 Q7.4 10.200000000000001 3.8000000000000003 8.4Z" fill="#7fb0e2"/><text x="13.8" y="6.4" font-size="8.6" font-weight="bold" fill="#27408b" text-anchor="middle" font-family="Liberation Sans, sans-serif" stroke="#27408b" stroke-width="0.3">c</text></svg>
<span id="t23" class="t " style="left:95.57px;top:181.00px;color:#000;font-size:10.7px;letter-spacing:0.013px;">defaultTask_attributes : const osThreadAttr_t</span>
<svg style="left:75.53px;top:198.77px;" width="14.67" height="14.67" viewBox="0 0 16 16"><circle cx="8" cy="8.4" r="4.3" fill="#2f6db4"/><path d="M4.4 8.0 Q8 5.4 11.6 8.0 Q8 9.8 4.4 8.0Z" fill="#7fb0e2"/></svg>
<span id="t24" class="t " style="left:95.57px;top:197.50px;color:#000;font-size:10.7px;letter-spacing:-0.039px;">defaultTaskHandle : osThreadId_t</span>
<svg style="left:75.53px;top:215.27px;" width="14.67" height="14.67" viewBox="0 0 16 16"><circle cx="8" cy="8.4" r="4.3" fill="#2f6db4"/><path d="M4.4 8.0 Q8 5.4 11.6 8.0 Q8 9.8 4.4 8.0Z" fill="#7fb0e2"/></svg>
<span id="t25" class="t " style="left:95.57px;top:214.00px;color:#000;font-size:10.7px;letter-spacing:-0.122px;">hadc1 : ADC_HandleTypeDef</span>
<svg style="left:75.53px;top:231.77px;" width="14.67" height="14.67" viewBox="0 0 16 16"><circle cx="8" cy="8.4" r="4.3" fill="#2f6db4"/><path d="M4.4 8.0 Q8 5.4 11.6 8.0 Q8 9.8 4.4 8.0Z" fill="#7fb0e2"/></svg>
<span id="t26" class="t " style="left:95.57px;top:230.50px;color:#000;font-size:10.7px;letter-spacing:-0.145px;">hdac1 : DAC_HandleTypeDef</span>
<svg style="left:75.53px;top:248.27px;" width="14.67" height="14.67" viewBox="0 0 16 16"><circle cx="8" cy="8.4" r="4.3" fill="#2f6db4"/><path d="M4.4 8.0 Q8 5.4 11.6 8.0 Q8 9.8 4.4 8.0Z" fill="#7fb0e2"/></svg>
<span id="t27" class="t " style="left:95.57px;top:247.00px;color:#000;font-size:10.7px;letter-spacing:-0.411px;">hhcd_USB_OTG_FS : HCD_HandleTypeDef</span>
<svg style="left:75.53px;top:264.77px;" width="14.67" height="14.67" viewBox="0 0 16 16"><circle cx="8" cy="8.4" r="4.3" fill="#2f6db4"/><path d="M4.4 8.0 Q8 5.4 11.6 8.0 Q8 9.8 4.4 8.0Z" fill="#7fb0e2"/></svg>
<span id="t28" class="t " style="left:95.57px;top:263.50px;color:#000;font-size:10.7px;letter-spacing:-0.168px;">hi2c1 : I2C_HandleTypeDef</span>
<svg style="left:75.53px;top:281.27px;" width="14.67" height="14.67" viewBox="0 0 16 16"><circle cx="8" cy="8.4" r="4.3" fill="#2f6db4"/><path d="M4.4 8.0 Q8 5.4 11.6 8.0 Q8 9.8 4.4 8.0Z" fill="#7fb0e2"/></svg>
<span id="t29" class="t " style="left:95.57px;top:280.00px;color:#000;font-size:10.7px;letter-spacing:-0.152px;">hqspi : QSPI_HandleTypeDef</span>
<svg style="left:75.53px;top:297.77px;" width="14.67" height="14.67" viewBox="0 0 16 16"><circle cx="8" cy="8.4" r="4.3" fill="#2f6db4"/><path d="M4.4 8.0 Q8 5.4 11.6 8.0 Q8 9.8 4.4 8.0Z" fill="#7fb0e2"/></svg>
<span id="t30" class="t " style="left:95.57px;top:296.50px;color:#000;font-size:10.7px;letter-spacing:-0.192px;">hspi1 : SPI_HandleTypeDef</span>
<svg style="left:75.53px;top:314.27px;" width="14.67" height="14.67" viewBox="0 0 16 16"><circle cx="8" cy="8.4" r="4.3" fill="#2f6db4"/><path d="M4.4 8.0 Q8 5.4 11.6 8.0 Q8 9.8 4.4 8.0Z" fill="#7fb0e2"/></svg>
<span id="t31" class="t " style="left:95.57px;top:313.00px;color:#000;font-size:10.7px;letter-spacing:0.002px;">htim8 : TIM_HandleTypeDef</span>
<svg style="left:75.53px;top:330.77px;" width="14.67" height="14.67" viewBox="0 0 16 16"><circle cx="8" cy="8.4" r="4.3" fill="#2f6db4"/><path d="M4.4 8.0 Q8 5.4 11.6 8.0 Q8 9.8 4.4 8.0Z" fill="#7fb0e2"/></svg>
<span id="t32" class="t " style="left:95.57px;top:329.50px;color:#000;font-size:10.7px;letter-spacing:-0.214px;">husart1 : USART_HandleTypeDef</span>
<svg style="left:75.53px;top:347.27px;" width="14.67" height="14.67" viewBox="0 0 16 16"><circle cx="8.6" cy="8.6" r="3.1" fill="#86c08a" stroke="#5fa06c" stroke-width="1.3"/><path d="M1.6 13.6 L14.6 2.6" stroke="#8a8a8a" stroke-width="1.1"/></svg>
<span id="t33" class="t " style="left:95.57px;top:346.00px;color:#a0a0a0;font-size:10.7px;letter-spacing:0.012px;">assert_failed(uint8_t*, uint32_t) : void</span>
<svg style="left:75.53px;top:363.77px;" width="14.67" height="14.67" viewBox="0 0 16 16"><circle cx="8.6" cy="8.6" r="3.1" fill="#5fae64" stroke="#2f8a45" stroke-width="1.3"/></svg>
<span id="t34" class="t " style="left:95.57px;top:362.50px;color:#000;font-size:10.7px;letter-spacing:0.018px;">Error_Handler(void) : void</span>
<svg style="left:75.53px;top:380.27px;" width="14.67" height="14.67" viewBox="0 0 16 16"><circle cx="8.6" cy="8.6" r="3.1" fill="#5fae64" stroke="#2f8a45" stroke-width="1.3"/></svg>
<span id="t35" class="t " style="left:95.57px;top:379.00px;color:#000;font-size:10.7px;letter-spacing:0.260px;">main(void) : int</span>
<svg style="left:75.53px;top:396.77px;" width="14.67" height="14.67" viewBox="0 0 16 16"><circle cx="8.6" cy="9.0" r="3.1" fill="#5fae64" stroke="#2f8a45" stroke-width="1.3"/><text x="0" y="0" font-size="9" font-weight="bold" fill="#dc3a52" text-anchor="middle" font-family="Liberation Sans, sans-serif" transform="translate(13.3,7.8) scale(0.8,1)">S</text></svg>
<span id="t36" class="t " style="left:95.57px;top:395.50px;color:#000;font-size:10.7px;letter-spacing:0.023px;">MX_ADC1_Init(void) : void</span>
<svg style="left:75.53px;top:413.27px;" width="14.67" height="14.67" viewBox="0 0 16 16"><circle cx="8.6" cy="9.0" r="3.1" fill="#5fae64" stroke="#2f8a45" stroke-width="1.3"/><text x="0" y="0" font-size="9" font-weight="bold" fill="#dc3a52" text-anchor="middle" font-family="Liberation Sans, sans-serif" transform="translate(13.3,7.8) scale(0.8,1)">S</text></svg>
<span id="t37" class="t " style="left:95.57px;top:412.00px;color:#000;font-size:10.7px;letter-spacing:0.023px;">MX_DAC1_Init(void) : void</span>
<svg style="left:75.53px;top:429.77px;" width="14.67" height="14.67" viewBox="0 0 16 16"><circle cx="8.6" cy="9.0" r="3.1" fill="#5fae64" stroke="#2f8a45" stroke-width="1.3"/><text x="0" y="0" font-size="9" font-weight="bold" fill="#dc3a52" text-anchor="middle" font-family="Liberation Sans, sans-serif" transform="translate(13.3,7.8) scale(0.8,1)">S</text></svg>
<span id="t38" class="t " style="left:95.57px;top:428.50px;color:#000;font-size:10.7px;letter-spacing:-0.016px;">MX_GPIO_Init(void) : void</span>
<svg style="left:75.53px;top:446.27px;" width="14.67" height="14.67" viewBox="0 0 16 16"><circle cx="8.6" cy="9.0" r="3.1" fill="#5fae64" stroke="#2f8a45" stroke-width="1.3"/><text x="0" y="0" font-size="9" font-weight="bold" fill="#dc3a52" text-anchor="middle" font-family="Liberation Sans, sans-serif" transform="translate(13.3,7.8) scale(0.8,1)">S</text></svg>
<span id="t39" class="t " style="left:95.57px;top:445.00px;color:#000;font-size:10.7px;letter-spacing:0.003px;">MX_I2C1_Init(void) : void</span>
<svg style="left:75.53px;top:462.77px;" width="14.67" height="14.67" viewBox="0 0 16 16"><circle cx="8.6" cy="9.0" r="3.1" fill="#5fae64" stroke="#2f8a45" stroke-width="1.3"/><text x="0" y="0" font-size="9" font-weight="bold" fill="#dc3a52" text-anchor="middle" font-family="Liberation Sans, sans-serif" transform="translate(13.3,7.8) scale(0.8,1)">S</text></svg>
<span id="t40" class="t " style="left:95.57px;top:461.50px;color:#000;font-size:10.7px;letter-spacing:-0.058px;">MX_QUADSPI_Init(void) : void</span>
<svg style="left:75.53px;top:479.27px;" width="14.67" height="14.67" viewBox="0 0 16 16"><circle cx="8.6" cy="9.0" r="3.1" fill="#5fae64" stroke="#2f8a45" stroke-width="1.3"/><text x="0" y="0" font-size="9" font-weight="bold" fill="#dc3a52" text-anchor="middle" font-family="Liberation Sans, sans-serif" transform="translate(13.3,7.8) scale(0.8,1)">S</text></svg>
<span id="t41" class="t " style="left:95.57px;top:478.00px;color:#000;font-size:10.7px;letter-spacing:-0.057px;">MX_SPI1_Init(void) : void</span>
<svg style="left:75.53px;top:495.77px;" width="14.67" height="14.67" viewBox="0 0 16 16"><circle cx="8.6" cy="9.0" r="3.1" fill="#5fae64" stroke="#2f8a45" stroke-width="1.3"/><text x="0" y="0" font-size="9" font-weight="bold" fill="#dc3a52" text-anchor="middle" font-family="Liberation Sans, sans-serif" transform="translate(13.3,7.8) scale(0.8,1)">S</text></svg>
<span id="t42" class="t " style="left:95.57px;top:494.50px;color:#000;font-size:10.7px;letter-spacing:0.043px;">MX_TIM8_Init(void) : void</span>
<svg style="left:75.53px;top:512.26px;" width="14.67" height="14.67" viewBox="0 0 16 16"><circle cx="8.6" cy="9.0" r="3.1" fill="#5fae64" stroke="#2f8a45" stroke-width="1.3"/><text x="0" y="0" font-size="9" font-weight="bold" fill="#dc3a52" text-anchor="middle" font-family="Liberation Sans, sans-serif" transform="translate(13.3,7.8) scale(0.8,1)">S</text></svg>
<span id="t43" class="t " style="left:95.57px;top:511.00px;color:#000;font-size:10.7px;letter-spacing:-0.104px;">MX_USART1_Init(void) : void</span>
<svg style="left:75.53px;top:528.76px;" width="14.67" height="14.67" viewBox="0 0 16 16"><circle cx="8.6" cy="9.0" r="3.1" fill="#5fae64" stroke="#2f8a45" stroke-width="1.3"/><text x="0" y="0" font-size="9" font-weight="bold" fill="#dc3a52" text-anchor="middle" font-family="Liberation Sans, sans-serif" transform="translate(13.3,7.8) scale(0.8,1)">S</text></svg>
<span id="t44" class="t " style="left:95.57px;top:527.50px;color:#000;font-size:10.7px;letter-spacing:-0.317px;">MX_USB_OTG_FS_HCD_Init(void) : void</span>
<svg style="left:75.53px;top:545.26px;" width="14.67" height="14.67" viewBox="0 0 16 16"><circle cx="8.6" cy="8.6" r="3.1" fill="#5fae64" stroke="#2f8a45" stroke-width="1.3"/></svg>
<span id="t45" class="t " style="left:95.57px;top:544.00px;color:#000;font-size:10.7px;letter-spacing:0.183px;">PeriphCommonClock_Config(void) : void</span>
<svg style="left:75.53px;top:561.76px;" width="14.67" height="14.67" viewBox="0 0 16 16"><circle cx="8.6" cy="8.6" r="3.1" fill="#5fae64" stroke="#2f8a45" stroke-width="1.3"/></svg>
<span id="t46" class="t " style="left:95.57px;top:560.50px;color:#000;font-size:10.7px;letter-spacing:0.081px;">StartDefaultTask(void*) : void</span>
<svg style="left:75.53px;top:578.26px;" width="14.67" height="14.67" viewBox="0 0 16 16"><circle cx="8.6" cy="8.6" r="3.1" fill="#5fae64" stroke="#2f8a45" stroke-width="1.3"/></svg>
<span id="t47" class="t " style="left:95.57px;top:577.00px;color:#000;font-size:10.7px;letter-spacing:0.075px;">SystemClock_Config(void) : void</span>
<svg style="left:47.40px;top:597.50px" width="12" height="12" viewBox="-6 -6 12 12"><path d="M-1.6 -3.8 L2.2 0 L-1.6 3.8" fill="none" stroke="#a6a6a6" stroke-width="1.3"/></svg>
<svg style="left:60.87px;top:594.76px;" width="14.67" height="14.67" viewBox="0 0 16 16"><path d="M3 1.4 H9.6 L13 4.8 V14.6 H3Z" fill="#f3f8fd" stroke="#b58d55" stroke-width="1"/><path d="M9.6 1.4 V4.8 H13" fill="#f7ecd4" stroke="#b58d55" stroke-width=".8"/><text x="7.9" y="12.8" font-size="10.4" font-weight="bold" fill="#2f63ae" text-anchor="middle" font-family="Liberation Sans, sans-serif" letter-spacing="-0.7">.c</text></svg>
<span id="t48" class="t " style="left:80.90px;top:593.50px;color:#000;font-size:10.7px;letter-spacing:-0.102px;">stm32l4xx_hal_msp.c</span>
<svg style="left:47.40px;top:614.00px" width="12" height="12" viewBox="-6 -6 12 12"><path d="M-1.6 -3.8 L2.2 0 L-1.6 3.8" fill="none" stroke="#a6a6a6" stroke-width="1.3"/></svg>
<svg style="left:60.87px;top:611.26px;" width="14.67" height="14.67" viewBox="0 0 16 16"><path d="M3 1.4 H9.6 L13 4.8 V14.6 H3Z" fill="#f3f8fd" stroke="#b58d55" stroke-width="1"/><path d="M9.6 1.4 V4.8 H13" fill="#f7ecd4" stroke="#b58d55" stroke-width=".8"/><text x="7.9" y="12.8" font-size="10.4" font-weight="bold" fill="#2f63ae" text-anchor="middle" font-family="Liberation Sans, sans-serif" letter-spacing="-0.7">.c</text></svg>
<span id="t49" class="t " style="left:80.90px;top:610.00px;color:#000;font-size:10.7px;letter-spacing:-0.047px;">stm32l4xx_hal_timebase_tim.c</span>
<svg style="left:47.40px;top:630.50px" width="12" height="12" viewBox="-6 -6 12 12"><path d="M-1.6 -3.8 L2.2 0 L-1.6 3.8" fill="none" stroke="#a6a6a6" stroke-width="1.3"/></svg>
<svg style="left:60.87px;top:627.76px;" width="14.67" height="14.67" viewBox="0 0 16 16"><path d="M3 1.4 H9.6 L13 4.8 V14.6 H3Z" fill="#f3f8fd" stroke="#b58d55" stroke-width="1"/><path d="M9.6 1.4 V4.8 H13" fill="#f7ecd4" stroke="#b58d55" stroke-width=".8"/><text x="7.9" y="12.8" font-size="10.4" font-weight="bold" fill="#2f63ae" text-anchor="middle" font-family="Liberation Sans, sans-serif" letter-spacing="-0.7">.c</text></svg>
<span id="t50" class="t " style="left:80.90px;top:626.50px;color:#000;font-size:10.7px;letter-spacing:-0.057px;">stm32l4xx_it.c</span>
<svg style="left:47.40px;top:647.00px" width="12" height="12" viewBox="-6 -6 12 12"><path d="M-1.6 -3.8 L2.2 0 L-1.6 3.8" fill="none" stroke="#a6a6a6" stroke-width="1.3"/></svg>
<svg style="left:60.87px;top:644.26px;" width="14.67" height="14.67" viewBox="0 0 16 16"><path d="M3 1.4 H9.6 L13 4.8 V14.6 H3Z" fill="#f3f8fd" stroke="#b58d55" stroke-width="1"/><path d="M9.6 1.4 V4.8 H13" fill="#f7ecd4" stroke="#b58d55" stroke-width=".8"/><text x="7.9" y="12.8" font-size="10.4" font-weight="bold" fill="#2f63ae" text-anchor="middle" font-family="Liberation Sans, sans-serif" letter-spacing="-0.7">.c</text></svg>
<span id="t51" class="t " style="left:80.90px;top:643.00px;color:#000;font-size:10.7px;letter-spacing:-0.357px;">syscalls.c</span>
<svg style="left:47.40px;top:663.50px" width="12" height="12" viewBox="-6 -6 12 12"><path d="M-1.6 -3.8 L2.2 0 L-1.6 3.8" fill="none" stroke="#a6a6a6" stroke-width="1.3"/></svg>
<svg style="left:60.87px;top:660.76px;" width="14.67" height="14.67" viewBox="0 0 16 16"><path d="M3 1.4 H9.6 L13 4.8 V14.6 H3Z" fill="#f3f8fd" stroke="#b58d55" stroke-width="1"/><path d="M9.6 1.4 V4.8 H13" fill="#f7ecd4" stroke="#b58d55" stroke-width=".8"/><text x="7.9" y="12.8" font-size="10.4" font-weight="bold" fill="#2f63ae" text-anchor="middle" font-family="Liberation Sans, sans-serif" letter-spacing="-0.7">.c</text></svg>
<span id="t52" class="t " style="left:80.90px;top:659.50px;color:#000;font-size:10.7px;letter-spacing:-0.053px;">sysmem.c</span>
<svg style="left:47.40px;top:680.00px" width="12" height="12" viewBox="-6 -6 12 12"><path d="M-1.6 -3.8 L2.2 0 L-1.6 3.8" fill="none" stroke="#a6a6a6" stroke-width="1.3"/></svg>
<svg style="left:60.87px;top:677.26px;" width="14.67" height="14.67" viewBox="0 0 16 16"><path d="M3 1.4 H9.6 L13 4.8 V14.6 H3Z" fill="#f3f8fd" stroke="#b58d55" stroke-width="1"/><path d="M9.6 1.4 V4.8 H13" fill="#f7ecd4" stroke="#b58d55" stroke-width=".8"/><text x="7.9" y="12.8" font-size="10.4" font-weight="bold" fill="#2f63ae" text-anchor="middle" font-family="Liberation Sans, sans-serif" letter-spacing="-0.7">.c</text></svg>
<span id="t53" class="t " style="left:80.90px;top:676.00px;color:#000;font-size:10.7px;letter-spacing:-0.100px;">system_stm32l4xx.c</span>
<svg style="left:32.73px;top:696.50px" width="12" height="12" viewBox="-6 -6 12 12"><path d="M-1.6 -3.8 L2.2 0 L-1.6 3.8" fill="none" stroke="#a6a6a6" stroke-width="1.3"/></svg>
<svg style="left:46.20px;top:693.76px;" width="14.67" height="14.67" viewBox="0 0 16 16"><g transform="translate(0.9,0.2)"><path d="M1 14 V5 Q1 3.6 2.4 3.6 H5.4 Q6.2 3.6 6.8 4.4 L7.4 5.2 H11.4 Q12.6 5.2 12.6 6.4 V8.2" fill="#fdeec4" stroke="#cf9838" stroke-width="1"/><path d="M1.2 14.6 L4 8.6 Q4.2 8.2 4.8 8.2 H15 Q15.6 8.2 15.3 8.8 L12.6 14.2 Q12.4 14.6 11.8 14.6Z" fill="#fbd988" stroke="#cf9838" stroke-width="1" stroke-linejoin="round"/><path d="M4.6 9.2 H14.2" stroke="#fef3d2" stroke-width=".9"/></g></svg>
<span id="t54" class="t " style="left:66.23px;top:692.50px;color:#000;font-size:10.7px;letter-spacing:0.052px;">Startup</span>
<svg style="left:18.07px;top:713.00px" width="12" height="12" viewBox="-6 -6 12 12"><path d="M-1.6 -3.8 L2.2 0 L-1.6 3.8" fill="none" stroke="#a6a6a6" stroke-width="1.3"/></svg>
<svg style="left:31.53px;top:710.26px;" width="14.67" height="14.67" viewBox="0 0 16 16"><g transform="translate(0.9,0.2)"><path d="M1 14 V5 Q1 3.6 2.4 3.6 H5.4 Q6.2 3.6 6.8 4.4 L7.4 5.2 H11.4 Q12.6 5.2 12.6 6.4 V8.2" fill="#fdeec4" stroke="#cf9838" stroke-width="1"/><path d="M1.2 14.6 L4 8.6 Q4.2 8.2 4.8 8.2 H15 Q15.6 8.2 15.3 8.8 L12.6 14.2 Q12.4 14.6 11.8 14.6Z" fill="#fbd988" stroke="#cf9838" stroke-width="1" stroke-linejoin="round"/><path d="M4.6 9.2 H14.2" stroke="#fef3d2" stroke-width=".9"/></g><rect x="8.6" y="1.6" width="7" height="6.4" rx="1.3" fill="#7fb0e8" stroke="#4a80c6" stroke-width=".8"/><text x="12.1" y="7.0" font-size="6.8" font-weight="bold" fill="#fff" text-anchor="middle" font-family="Liberation Sans, sans-serif" >c</text></svg>
<span id="t55" class="t " style="left:51.57px;top:709.00px;color:#000;font-size:10.7px;letter-spacing:-0.121px;">Drivers</span>
<svg style="left:18.07px;top:729.50px" width="12" height="12" viewBox="-6 -6 12 12"><path d="M-1.6 -3.8 L2.2 0 L-1.6 3.8" fill="none" stroke="#a6a6a6" stroke-width="1.3"/></svg>
<svg style="left:31.53px;top:726.76px;" width="14.67" height="14.67" viewBox="0 0 16 16"><g transform="translate(0.9,0.2)"><path d="M1 14 V5 Q1 3.6 2.4 3.6 H5.4 Q6.2 3.6 6.8 4.4 L7.4 5.2 H11.4 Q12.6 5.2 12.6 6.4 V8.2" fill="#fdeec4" stroke="#cf9838" stroke-width="1"/><path d="M1.2 14.6 L4 8.6 Q4.2 8.2 4.8 8.2 H15 Q15.6 8.2 15.3 8.8 L12.6 14.2 Q12.4 14.6 11.8 14.6Z" fill="#fbd988" stroke="#cf9838" stroke-width="1" stroke-linejoin="round"/><path d="M4.6 9.2 H14.2" stroke="#fef3d2" stroke-width=".9"/></g><rect x="8.6" y="1.6" width="7" height="6.4" rx="1.3" fill="#7fb0e8" stroke="#4a80c6" stroke-width=".8"/><text x="12.1" y="7.0" font-size="6.8" font-weight="bold" fill="#fff" text-anchor="middle" font-family="Liberation Sans, sans-serif" >c</text></svg>
<span id="t56" class="t " style="left:51.57px;top:725.50px;color:#000;font-size:10.7px;letter-spacing:0.129px;">Middlewares</span>
<svg style="left:18.07px;top:746.00px" width="12" height="12" viewBox="-6 -6 12 12"><path d="M-1.6 -3.8 L2.2 0 L-1.6 3.8" fill="none" stroke="#a6a6a6" stroke-width="1.3"/></svg>
<svg style="left:31.53px;top:743.26px;" width="14.67" height="14.67" viewBox="0 0 16 16"><g transform="translate(0.9,0.2)"><path d="M1 14 V5 Q1 3.6 2.4 3.6 H5.4 Q6.2 3.6 6.8 4.4 L7.4 5.2 H11.4 Q12.6 5.2 12.6 6.4 V8.2" fill="#fdeec4" stroke="#cf9838" stroke-width="1"/><path d="M1.2 14.6 L4 8.6 Q4.2 8.2 4.8 8.2 H15 Q15.6 8.2 15.3 8.8 L12.6 14.2 Q12.4 14.6 11.8 14.6Z" fill="#fbd988" stroke="#cf9838" stroke-width="1" stroke-linejoin="round"/><path d="M4.6 9.2 H14.2" stroke="#fef3d2" stroke-width=".9"/></g><rect x="8.6" y="1.6" width="7" height="6.4" rx="1.3" fill="#7fb0e8" stroke="#4a80c6" stroke-width=".8"/><text x="12.1" y="7.0" font-size="6.8" font-weight="bold" fill="#fff" text-anchor="middle" font-family="Liberation Sans, sans-serif" >c</text><rect x="8.6" y="8.8" width="6.6" height="6.6" fill="#dfe6f2" stroke="#4a5a78" stroke-width=".9"/><path d="M10.2 13.8 L13.4 10.6 M11 10.4 H13.6 V13" stroke="#1f2f58" stroke-width="1" fill="none"/></svg>
<span id="t57" class="t " style="left:51.57px;top:742.00px;color:#000;font-size:10.7px;letter-spacing:-0.337px;">src_shared</span>
<svg style="left:18.07px;top:762.50px" width="12" height="12" viewBox="-6 -6 12 12"><path d="M-1.6 -3.8 L2.2 0 L-1.6 3.8" fill="none" stroke="#a6a6a6" stroke-width="1.3"/></svg>
<svg style="left:31.53px;top:759.76px;" width="14.67" height="14.67" viewBox="0 0 16 16"><g transform="translate(0.9,0.2)"><path d="M1 14 V5 Q1 3.6 2.4 3.6 H5.4 Q6.2 3.6 6.8 4.4 L7.4 5.2 H11.4 Q12.6 5.2 12.6 6.4 V8.2" fill="#fdeec4" stroke="#cf9838" stroke-width="1"/><path d="M1.2 14.6 L4 8.6 Q4.2 8.2 4.8 8.2 H15 Q15.6 8.2 15.3 8.8 L12.6 14.2 Q12.4 14.6 11.8 14.6Z" fill="#fbd988" stroke="#cf9838" stroke-width="1" stroke-linejoin="round"/><path d="M4.6 9.2 H14.2" stroke="#fef3d2" stroke-width=".9"/></g></svg>
<span id="t58" class="t " style="left:51.57px;top:758.50px;color:#000;font-size:10.7px;letter-spacing:0.117px;">Debug</span>
<svg style="left:31.53px;top:776.26px;" width="14.67" height="14.67" viewBox="0 0 16 16"><rect width="16" height="16" fill="#3cb4e6"/><text x="8" y="11.2" font-size="8.6" font-weight="bold" fill="#e4f4fc" text-anchor="middle" font-family="Liberation Sans, sans-serif" letter-spacing="-0.3" stroke="#e4f4fc" stroke-width="0.3">MX</text></svg>
<span id="t59" class="t " style="left:51.57px;top:775.00px;color:#000;font-size:10.7px;letter-spacing:-0.418px;">APP1_L475VG_MX.ioc</span>
<svg style="left:31.53px;top:792.76px;" width="14.67" height="14.67" viewBox="0 0 16 16"><path d="M1.5 1.5 H9 L12.5 5 V14.5 H1.5Z" fill="#fbfbfb" stroke="#5a5a5a" stroke-width="1"/><path d="M9 1.5 V5 H12.5" fill="#e8e8e8" stroke="#5a5a5a" stroke-width=".8"/><rect x="3" y="9" width="8" height="4.4" fill="#4fa85a"/><path d="M3 11 L5.4 8.6 L7.4 10.4 L11 7.6" stroke="#e8a030" stroke-width="1.2" fill="none"/><path d="M8.6 10.6 L15 1.4" stroke="#a8382a" stroke-width="1.7"/><path d="M8 11.6 L9.4 9.6" stroke="#f0c060" stroke-width="1.7"/></svg>
<span id="t60" class="t " style="left:51.57px;top:791.50px;color:#000;font-size:10.7px;letter-spacing:-0.034px;">mx.scratch</span>
<svg style="left:31.53px;top:809.26px;" width="14.67" height="14.67" viewBox="0 0 16 16"><path d="M3 1.4 H9.6 L13 4.8 V14.6 H3Z" fill="#f7fafe" stroke="#a9b4c4" stroke-width="1"/><path d="M9.6 1.4 V4.8 H13" fill="#f3e6c8" stroke="#c7a96a" stroke-width=".8"/><path d="M4.6 4.6 H8 M4.6 6.4 H9.6" stroke="#9ab8e0" stroke-width=".9"/><text x="9.6" y="13.6" font-size="6.2" font-weight="bold" fill="#1f3f86" text-anchor="middle" font-family="Liberation Sans, sans-serif" letter-spacing="-0.3">LD</text></svg>
<span id="t61" class="t " style="left:51.57px;top:808.00px;color:#000;font-size:10.7px;letter-spacing:-0.527px;">STM32L475VGTX_FLASH.ld</span>
<svg style="left:31.53px;top:825.76px;" width="14.67" height="14.67" viewBox="0 0 16 16"><path d="M3 1.4 H9.6 L13 4.8 V14.6 H3Z" fill="#f7fafe" stroke="#a9b4c4" stroke-width="1"/><path d="M9.6 1.4 V4.8 H13" fill="#f3e6c8" stroke="#c7a96a" stroke-width=".8"/><path d="M4.6 4.6 H8 M4.6 6.4 H9.6" stroke="#9ab8e0" stroke-width=".9"/><text x="9.6" y="13.6" font-size="6.2" font-weight="bold" fill="#1f3f86" text-anchor="middle" font-family="Liberation Sans, sans-serif" letter-spacing="-0.3">LD</text></svg>
<span id="t62" class="t " style="left:51.57px;top:824.50px;color:#000;font-size:10.7px;letter-spacing:-0.411px;">STM32L475VGTX_RAM.ld</span>
</div>
<div style="left:414.90px;top:65.40px;width:1007.10px;height:628.60px;background:#fff;border:1px solid #dcdcdc;box-sizing:border-box;"></div>
<div style="left:414.90px;top:65.40px;width:1007.10px;height:23.60px;background:#eeeeee;border:1px solid #dcdcdc;border-bottom-color:#d6d6d6;box-sizing:border-box;"></div>
<div style="left:415.70px;top:66.20px;width:77.60px;height:22.80px;background:#fff;border-right:1px solid #dcdcdc;box-sizing:border-box;"></div>
<svg style="left:419.56px;top:70.47px;" width="14.67" height="14.67" viewBox="0 0 16 16"><path d="M3 1.4 H9.6 L13 4.8 V14.6 H3Z" fill="#f3f8fd" stroke="#b58d55" stroke-width="1"/><path d="M9.6 1.4 V4.8 H13" fill="#f7ecd4" stroke="#b58d55" stroke-width=".8"/><text x="7.9" y="12.8" font-size="10.4" font-weight="bold" fill="#2f63ae" text-anchor="middle" font-family="Liberation Sans, sans-serif" letter-spacing="-0.7">.c</text></svg>
<span id="t63" class="t " style="left:437.00px;top:69.80px;color:#000;font-size:10.7px;letter-spacing:0.203px;">main.c</span>
<svg style="left:475.70px;top:72.40px" width="12" height="12" viewBox="-6 -6 12 12"><path d="M-4.3 -4.3 L4.3 4.3 M4.3 -4.3 L-4.3 4.3" fill="none" stroke="#3a3a3a" stroke-width="1.0"/></svg>
<svg style="left:1379.90px;top:70.30px" width="12" height="8" viewBox="-6 -4 12 8"><rect x="-4.6" y="-1.6" width="9.2" height="3.2" rx="0.8" fill="#fff" stroke="#2a2a2a" stroke-width="1.2"/></svg>
<svg style="left:1401.00px;top:71.00px" width="12" height="12" viewBox="-6 -6 12 12"><rect x="-4.4" y="-4.4" width="8.8" height="8.8" rx="0.8" fill="#fff" stroke="#2a2a2a" stroke-width="1.2"/><rect x="-4.4" y="-4.6" width="8.8" height="2.4" fill="#2a2a2a"/></svg>
<div style="left:415.60px;top:89.00px;width:10.60px;height:604.00px;background:#f8f8f8;"></div>
<div style="left:454.30px;top:89.00px;width:0.80px;height:591.40px;background:#f0f0f0;"></div>
<div style="left:415.40px;top:227.00px;width:10.60px;height:150.80px;background:#79b4e8;background-image:repeating-conic-gradient(#9ccaf0 0 25%, #5c9fe0 0 50%);background-size:2px 2px;border-bottom:1px solid #3f86d0;box-sizing:border-box;"></div>
<div style="left:457.00px;top:323.15px;width:937.10px;height:13.75px;background:#e8f2fe;"></div>
<div style="left:482.40px;top:323.15px;width:51.60px;height:13.75px;background:#d4d4d4;"></div>
<div style="left:415.7px;top:323.85px;width:10.1px;height:12.6px;background:#f6c468;border:1px dotted #d9952e;box-sizing:border-box;"></div>
<span id="t64" class="t " style="left:417.60px;top:322.45px;color:#3a5fa0;font-size:10.6px;letter-spacing:0.000px;font-weight:bold;">?</span>
<span class="m" style="left:426.70px;top:89.90px;color:#787878;">685</span>
<span class="m" style="left:426.70px;top:103.65px;color:#787878;">686</span>
<span class="m" style="left:457.20px;top:103.65px;"><span class="c">/* USER CODE END 4 */</span></span>
<span class="m" style="left:426.70px;top:117.40px;color:#787878;">687</span>
<span class="m" style="left:426.70px;top:131.15px;color:#787878;">688</span>
<span class="m" style="left:457.20px;top:131.15px;"><span class="c">/* USER CODE BEGIN Header_StartDefaultTask */</span></span>
<span class="m" style="left:426.70px;top:144.90px;color:#787878;">689</span>
<span class="m" style="left:457.20px;top:144.90px;"><span class="c">/**</span></span>
<span class="m" style="left:426.70px;top:158.65px;color:#787878;">690</span>
<span class="m" style="left:457.20px;top:158.65px;"><span class="c">  * @brief  Function implementing the defaultTask thread.</span></span>
<span class="m" style="left:426.70px;top:172.40px;color:#787878;">691</span>
<span class="m" style="left:457.20px;top:172.40px;"><span class="c">  * </span><span class="c">@param</span><span class="c">  argument: Not used</span></span>
<span class="m" style="left:426.70px;top:186.15px;color:#787878;">692</span>
<span class="m" style="left:457.20px;top:186.15px;"><span class="c">  * </span><span class="c">@retval</span><span class="c"> None</span></span>
<span class="m" style="left:426.70px;top:199.90px;color:#787878;">693</span>
<span class="m" style="left:457.20px;top:199.90px;"><span class="c">  */</span></span>
<span class="m" style="left:426.70px;top:213.65px;color:#787878;">694</span>
<span class="m" style="left:457.20px;top:213.65px;"><span class="c">/* USER CODE END Header_StartDefaultTask */</span></span>
<span class="m" style="left:426.70px;top:227.40px;color:#787878;">695</span>
<span class="m" style="left:457.20px;top:227.40px;"><span class="k">void</span> <b>StartDefaultTask</b>(<span class="k">void</span> *argument)</span>
<span class="m" style="left:426.70px;top:241.15px;color:#787878;">696</span>
<span class="m" style="left:457.20px;top:241.15px;">{</span>
<span class="m" style="left:426.70px;top:254.90px;color:#787878;">697</span>
<span class="m" style="left:457.20px;top:254.90px;"><span class="c">  /* USER CODE BEGIN 5 */</span></span>
<span class="m" style="left:426.70px;top:268.65px;color:#787878;">698</span>
<span class="m" style="left:457.20px;top:268.65px;"><span class="c">  /* Infinite loop */</span></span>
<span class="m" style="left:426.70px;top:282.40px;color:#787878;">699</span>
<span class="m" style="left:457.20px;top:282.40px;">  <span class="k">for</span>(;;)</span>
<span class="m" style="left:426.70px;top:296.15px;color:#787878;">700</span>
<span class="m" style="left:457.20px;top:296.15px;">  {</span>
<span class="m" style="left:426.70px;top:309.90px;color:#787878;">701</span>
<span class="m" style="left:457.20px;top:309.90px;">    osDelay(1);</span>
<span class="m" style="left:426.70px;top:323.65px;color:#787878;">702</span>
<span class="m" style="left:457.20px;top:323.65px;">    HAL_GPIO</span>
<span class="m" style="left:426.70px;top:337.40px;color:#787878;">703</span>
<span class="m" style="left:457.20px;top:337.40px;">  }</span>
<span class="m" style="left:426.70px;top:351.15px;color:#787878;">704</span>
<span class="m" style="left:457.20px;top:351.15px;"><span class="c">  /* USER CODE END 5 */</span></span>
<span class="m" style="left:426.70px;top:364.90px;color:#787878;">705</span>
<span class="m" style="left:457.20px;top:364.90px;">}</span>
<span class="m" style="left:426.70px;top:378.65px;color:#787878;">706</span>
<span class="m" style="left:426.70px;top:392.40px;color:#787878;">707</span>
<span class="m" style="left:457.20px;top:392.40px;"><span class="c">/**</span></span>
<span class="m" style="left:426.70px;top:406.15px;color:#787878;">708</span>
<span class="m" style="left:457.20px;top:406.15px;"><span class="c">  * @brief  Period elapsed callback in non blocking mode</span></span>
<span class="m" style="left:426.70px;top:419.90px;color:#787878;">709</span>
<span class="m" style="left:457.20px;top:419.90px;"><span class="c">  * @note   This function is called  when TIM6 interrupt took place, inside</span></span>
<span class="m" style="left:426.70px;top:433.65px;color:#787878;">710</span>
<span class="m" style="left:457.20px;top:433.65px;"><span class="c">  * HAL_TIM_IRQHandler(). It makes a direct call to HAL_IncTick() to increment</span></span>
<span class="m" style="left:426.70px;top:447.40px;color:#787878;">711</span>
<span class="m" style="left:457.20px;top:447.40px;"><span class="c">  * a global variable "uwTick" used as application time base.</span></span>
<span class="m" style="left:426.70px;top:461.15px;color:#787878;">712</span>
<span class="m" style="left:457.20px;top:461.15px;"><span class="c">  * </span><span class="c">@param</span><span class="c">  htim : TIM handle</span></span>
<span class="m" style="left:426.70px;top:474.90px;color:#787878;">713</span>
<span class="m" style="left:457.20px;top:474.90px;"><span class="c">  * </span><span class="c">@retval</span><span class="c"> None</span></span>
<span class="m" style="left:426.70px;top:488.65px;color:#787878;">714</span>
<span class="m" style="left:457.20px;top:488.65px;"><span class="c">  */</span></span>
<span class="m" style="left:426.70px;top:502.40px;color:#787878;">715</span>
<span class="m" style="left:457.20px;top:502.40px;"><span class="c">//void HAL_TIM_PeriodElapsedCallback(TIM_HandleTypeDef *htim)</span></span>
<span class="m" style="left:426.70px;top:516.15px;color:#787878;">716</span>
<span class="m" style="left:457.20px;top:516.15px;"><span class="c">//{</span></span>
<span class="m" style="left:426.70px;top:529.90px;color:#787878;">717</span>
<span class="m" style="left:457.20px;top:529.90px;"><span class="c">//  /* USER CODE BEGIN Callback 0 */</span></span>
<span class="m" style="left:426.70px;top:543.65px;color:#787878;">718</span>
<span class="m" style="left:457.20px;top:543.65px;"><span class="c">//</span></span>
<span class="m" style="left:426.70px;top:557.40px;color:#787878;">719</span>
<span class="m" style="left:457.20px;top:557.40px;"><span class="c">//  /* USER CODE END Callback 0 */</span></span>
<span class="m" style="left:426.70px;top:571.15px;color:#787878;">720</span>
<span class="m" style="left:457.20px;top:571.15px;"><span class="c">//  if (</span><span class="c">htim</span><span class="c">-&gt;Instance == TIM6) {</span></span>
<span class="m" style="left:426.70px;top:584.90px;color:#787878;">721</span>
<span class="m" style="left:457.20px;top:584.90px;"><span class="c">//    HAL_IncTick();</span></span>
<span class="m" style="left:426.70px;top:598.65px;color:#787878;">722</span>
<span class="m" style="left:457.20px;top:598.65px;"><span class="c">//  }</span></span>
<span class="m" style="left:426.70px;top:612.40px;color:#787878;">723</span>
<span class="m" style="left:457.20px;top:612.40px;"><span class="c">//  /* USER CODE BEGIN Callback 1 */</span></span>
<span class="m" style="left:426.70px;top:626.15px;color:#787878;">724</span>
<span class="m" style="left:457.20px;top:626.15px;"><span class="c">//</span></span>
<span class="m" style="left:426.70px;top:639.90px;color:#787878;">725</span>
<span class="m" style="left:457.20px;top:639.90px;"><span class="c">//  /* USER CODE END Callback 1 */</span></span>
<span class="m" style="left:426.70px;top:653.65px;color:#787878;">726</span>
<span class="m" style="left:457.20px;top:653.65px;"><span class="c">//}</span></span>
<span class="m" style="left:426.70px;top:667.40px;color:#787878;">727</span>
<svg style="left:482.87px;top:182.40px" width="39.5" height="3" viewBox="0 0 39.5 2.6"><polyline points="0.0,0.3 1.6,2.1 3.2,0.3 4.8,2.1 6.4,0.3 8.0,2.1 9.6,0.3 11.2,2.1 12.8,0.3 14.4,2.1 16.0,0.3 17.6,2.1 19.2,0.3 20.8,2.1 22.4,0.3 24.0,2.1 25.6,0.3 27.2,2.1 28.8,0.3 30.4,2.1 32.0,0.3 33.6,2.1 35.2,0.3 36.8,2.1 38.4,0.3" fill="none" stroke="#e0301e" stroke-width="0.75" opacity="0.8"/></svg>
<svg style="left:482.87px;top:196.15px" width="45.9" height="3" viewBox="0 0 45.9 2.6"><polyline points="0.0,0.3 1.6,2.1 3.2,0.3 4.8,2.1 6.4,0.3 8.0,2.1 9.6,0.3 11.2,2.1 12.8,0.3 14.4,2.1 16.0,0.3 17.6,2.1 19.2,0.3 20.8,2.1 22.4,0.3 24.0,2.1 25.6,0.3 27.2,2.1 28.8,0.3 30.4,2.1 32.0,0.3 33.6,2.1 35.2,0.3 36.8,2.1 38.4,0.3 40.0,2.1 41.6,0.3 43.2,2.1 44.8,0.3" fill="none" stroke="#e0301e" stroke-width="0.75" opacity="0.8"/></svg>
<svg style="left:482.87px;top:471.15px" width="39.5" height="3" viewBox="0 0 39.5 2.6"><polyline points="0.0,0.3 1.6,2.1 3.2,0.3 4.8,2.1 6.4,0.3 8.0,2.1 9.6,0.3 11.2,2.1 12.8,0.3 14.4,2.1 16.0,0.3 17.6,2.1 19.2,0.3 20.8,2.1 22.4,0.3 24.0,2.1 25.6,0.3 27.2,2.1 28.8,0.3 30.4,2.1 32.0,0.3 33.6,2.1 35.2,0.3 36.8,2.1 38.4,0.3" fill="none" stroke="#e0301e" stroke-width="0.75" opacity="0.8"/></svg>
<svg style="left:482.87px;top:484.90px" width="45.9" height="3" viewBox="0 0 45.9 2.6"><polyline points="0.0,0.3 1.6,2.1 3.2,0.3 4.8,2.1 6.4,0.3 8.0,2.1 9.6,0.3 11.2,2.1 12.8,0.3 14.4,2.1 16.0,0.3 17.6,2.1 19.2,0.3 20.8,2.1 22.4,0.3 24.0,2.1 25.6,0.3 27.2,2.1 28.8,0.3 30.4,2.1 32.0,0.3 33.6,2.1 35.2,0.3 36.8,2.1 38.4,0.3 40.0,2.1 41.6,0.3 43.2,2.1 44.8,0.3" fill="none" stroke="#e0301e" stroke-width="0.75" opacity="0.8"/></svg>
<svg style="left:508.53px;top:581.15px" width="26.7" height="3" viewBox="0 0 26.7 2.6"><polyline points="0.0,0.3 1.6,2.1 3.2,0.3 4.8,2.1 6.4,0.3 8.0,2.1 9.6,0.3 11.2,2.1 12.8,0.3 14.4,2.1 16.0,0.3 17.6,2.1 19.2,0.3 20.8,2.1 22.4,0.3 24.0,2.1 25.6,0.3" fill="none" stroke="#e0301e" stroke-width="0.75" opacity="0.8"/></svg>
<svg style="left:482.87px;top:333.85px" width="52.3" height="3" viewBox="0 0 52.3 2.6"><polyline points="0.0,0.3 1.6,2.1 3.2,0.3 4.8,2.1 6.4,0.3 8.0,2.1 9.6,0.3 11.2,2.1 12.8,0.3 14.4,2.1 16.0,0.3 17.6,2.1 19.2,0.3 20.8,2.1 22.4,0.3 24.0,2.1 25.6,0.3 27.2,2.1 28.8,0.3 30.4,2.1 32.0,0.3 33.6,2.1 35.2,0.3 36.8,2.1 38.4,0.3 40.0,2.1 41.6,0.3 43.2,2.1 44.8,0.3 46.4,2.1 48.0,0.3 49.6,2.1 51.2,0.3" fill="none" stroke="#e9a23b" stroke-width="0.75" opacity="0.8"/></svg>
<svg style="left:445.90px;top:146.50px" width="8" height="8" viewBox="0 0 8 8"><circle cx="4" cy="4" r="3.3" fill="#f1f1f1" stroke="#8f8f8f" stroke-width="0.8"/><path d="M2.1 4 H5.9" stroke="#4a4a4a" stroke-width="0.9"/></svg>
<svg style="left:445.90px;top:229.00px" width="8" height="8" viewBox="0 0 8 8"><circle cx="4" cy="4" r="3.3" fill="#f1f1f1" stroke="#8f8f8f" stroke-width="0.8"/><path d="M2.1 4 H5.9" stroke="#4a4a4a" stroke-width="0.9"/></svg>
<svg style="left:445.90px;top:394.00px" width="8" height="8" viewBox="0 0 8 8"><circle cx="4" cy="4" r="3.3" fill="#f1f1f1" stroke="#8f8f8f" stroke-width="0.8"/><path d="M2.1 4 H5.9" stroke="#4a4a4a" stroke-width="0.9"/></svg>
<svg style="left:445.90px;top:504.00px" width="8" height="8" viewBox="0 0 8 8"><circle cx="4" cy="4" r="3.3" fill="#f1f1f1" stroke="#8f8f8f" stroke-width="0.8"/><path d="M2.1 4 H5.9" stroke="#4a4a4a" stroke-width="0.9"/></svg>
<div style="left:1394.10px;top:89.00px;width:14.50px;height:591.40px;background:#f0f0f0;"></div>
<div style="left:1394.10px;top:607.90px;width:14.50px;height:31.10px;background:#cdcdcd;"></div>
<svg style="left:1395.30px;top:91.00px" width="12" height="12" viewBox="-6 -6 12 12"><path d="M-3.2 1.6 L0 -1.6 L3.2 1.6" fill="none" stroke="#606060" stroke-width="1.6"/></svg>
<svg style="left:1395.30px;top:664.80px" width="12" height="12" viewBox="-6 -6 12 12"><path d="M-3.2 -1.6 L0 1.6 L3.2 -1.6" fill="none" stroke="#606060" stroke-width="1.6"/></svg>
<div style="left:1408.60px;top:89.00px;width:12.60px;height:604.20px;background:#f7f7f7;"></div>
<div style="left:1411.60px;top:617.60px;width:6.40px;height:4.40px;background:#fafafa;border:1px solid #d0d0d0;box-sizing:border-box;"></div>
<div style="left:455.00px;top:680.40px;width:953.60px;height:13.00px;background:#f0f0f0;"></div>
<svg style="left:455.70px;top:681.00px" width="12" height="12" viewBox="-6 -6 12 12"><path d="M1.6 -3.2 L-1.6 0 L1.6 3.2" fill="none" stroke="#c4c4c4" stroke-width="1.6"/></svg>
<svg style="left:1379.00px;top:681.00px" width="12" height="12" viewBox="-6 -6 12 12"><path d="M-1.6 -3.2 L1.6 0 L-1.6 3.2" fill="none" stroke="#c4c4c4" stroke-width="1.6"/></svg>
<div style="left:1425.60px;top:65.40px;width:334.40px;height:628.60px;background:#fff;border:1px solid #dcdcdc;box-sizing:border-box;"></div>
<div style="left:1425.60px;top:65.40px;width:334.40px;height:23.60px;background:#e6e6e6;border:1px solid #dcdcdc;border-bottom-color:#dadada;box-sizing:border-box;"></div>
<div style="left:1426.40px;top:66.20px;width:82.00px;height:22.80px;background:#f0f0f0;border-right:1px solid #dcdcdc;box-sizing:border-box;"></div>
<svg style="left:1429.57px;top:70.27px;" width="14.67" height="14.67" viewBox="0 0 16 16"><rect x="1.4" y="1.4" width="5" height="5" fill="#e9f2fc" stroke="#3b78c2" stroke-width="1.2"/><rect x="1.4" y="9.6" width="5" height="5" fill="#e9f2fc" stroke="#3b78c2" stroke-width="1.2"/><path d="M8.4 3.9 H14.6 M8.4 12.1 H14.6 M12.6 8 H14.8" stroke="#7aa7dc" stroke-width="1.3"/><rect x="8" y="6.6" width="2.8" height="2.8" fill="#fff" stroke="#3b78c2" stroke-width="1"/></svg>
<span id="t65" class="t " style="left:1447.70px;top:69.60px;color:#000;font-size:10.7px;letter-spacing:0.289px;">Outline</span>
<svg style="left:1490.40px;top:72.30px" width="12" height="12" viewBox="-6 -6 12 12"><path d="M-4.3 -4.3 L4.3 4.3 M4.3 -4.3 L-4.3 4.3" fill="none" stroke="#3a3a3a" stroke-width="1.0"/></svg>
<svg style="left:1570.26px;top:69.97px;" width="14.67" height="14.67" viewBox="0 0 16 16"><rect x="1.5" y="1.5" width="10" height="10" fill="#eef3fb" stroke="#a9bcd8" stroke-width="1"/><rect x="4" y="4" width="10.5" height="10.5" fill="#fbfdff" stroke="#a9bcd8" stroke-width="1"/><path d="M6.4 9.3 H12.2" stroke="#1f4fa8" stroke-width="1.6"/></svg>
<svg style="left:1593.96px;top:69.97px;" width="14.67" height="14.67" viewBox="0 0 16 16"><path d="M3.6 1.6 V13.4 M1.6 11 L3.6 13.8 L5.6 11" stroke="#5f7391" stroke-width="1" fill="none"/><text x="10" y="7.4" font-size="10.5" font-weight="bold" fill="#2f8a5a" text-anchor="middle" font-family="Liberation Serif, serif" >a</text><text x="11.6" y="15.2" font-size="11.5" font-weight="bold" fill="#8a2f9a" text-anchor="middle" font-family="Liberation Serif, serif" >z</text></svg>
<svg style="left:1612.46px;top:69.97px;" width="14.67" height="14.67" viewBox="0 0 16 16"><circle cx="8.4" cy="8" r="4.4" fill="#8ec4f6" stroke="#3b8ee0" stroke-width="1.6"/><path d="M6.6 10 V6 H10 M6.6 8 H9.4" stroke="#eaf4fe" stroke-width="1.2" fill="none"/><path d="M1.4 1.6 L14.6 14.2" stroke="#2f4f9a" stroke-width="1.3"/></svg>
<svg style="left:1632.66px;top:69.97px;" width="14.67" height="14.67" viewBox="0 0 16 16"><circle cx="6" cy="10" r="3.4" fill="#b4b8bc" stroke="#8a8e92" stroke-width="1"/><path d="M1 4.6 L12 15.4" stroke="#2f4f9a" stroke-width="1.3"/><text x="12.6" y="7.4" font-size="8" font-weight="bold" fill="#d9304a" text-anchor="middle" font-family="Liberation Sans, sans-serif" >S</text></svg>
<svg style="left:1654.66px;top:69.97px;" width="14.67" height="14.67" viewBox="0 0 16 16"><circle cx="8" cy="8.4" r="4.1" fill="#66b96e" stroke="#3f9a52" stroke-width="1.1"/><circle cx="8" cy="7.6" r="1.6" fill="#8fd094"/></svg>
<svg style="left:1675.66px;top:69.97px;" width="14.67" height="14.67" viewBox="0 0 16 16"><path d="M5.6 2 V14 M10.4 2 V14 M2 5.6 H14 M2 10.4 H14" stroke="#111" stroke-width="2"/><path d="M2 2 L14.6 14.4" stroke="#555" stroke-width=".9"/></svg>
<svg style="left:1701.40px;top:70.20px" width="6" height="14" viewBox="-3 -7 6 14"><circle cx="0" cy="-4.3" r="1.65" fill="#fff" stroke="#5a5a5a" stroke-width="0.85"/><circle cx="0" cy="0" r="1.65" fill="#fff" stroke="#5a5a5a" stroke-width="0.85"/><circle cx="0" cy="4.3" r="1.65" fill="#fff" stroke="#5a5a5a" stroke-width="0.85"/></svg>
<svg style="left:1719.40px;top:70.30px" width="12" height="8" viewBox="-6 -4 12 8"><rect x="-4.6" y="-1.6" width="9.2" height="3.2" rx="0.8" fill="#fff" stroke="#2a2a2a" stroke-width="1.2"/></svg>
<svg style="left:1740.60px;top:71.00px" width="12" height="12" viewBox="-6 -6 12 12"><rect x="-4.4" y="-4.4" width="8.8" height="8.8" rx="0.8" fill="#fff" stroke="#2a2a2a" stroke-width="1.2"/><rect x="-4.4" y="-4.6" width="8.8" height="2.4" fill="#2a2a2a"/></svg>
<div style="left:1426.60px;top:89.00px;width:318.70px;height:591.20px;overflow:hidden;">
<svg style="left:22.27px;top:0.26px;" width="14.67" height="14.67" viewBox="0 0 16 16"><circle cx="8" cy="8.4" r="4.3" fill="#2f6db4"/><path d="M4.4 8.0 Q8 5.4 11.6 8.0 Q8 9.8 4.4 8.0Z" fill="#7fb0e2"/></svg>
<span id="t66" class="t " style="left:47.90px;top:-0.50px;color:#000;font-size:10.7px;letter-spacing:-0.145px;">hdac1<span style="color:#a08c5e"> : DAC_HandleTypeDef</span></span>
<svg style="left:22.27px;top:16.76px;" width="14.67" height="14.67" viewBox="0 0 16 16"><circle cx="8" cy="8.4" r="4.3" fill="#2f6db4"/><path d="M4.4 8.0 Q8 5.4 11.6 8.0 Q8 9.8 4.4 8.0Z" fill="#7fb0e2"/></svg>
<span id="t67" class="t " style="left:47.90px;top:16.00px;color:#000;font-size:10.7px;letter-spacing:-0.169px;">hi2c1<span style="color:#a08c5e"> : I2C_HandleTypeDef</span></span>
<svg style="left:22.27px;top:33.27px;" width="14.67" height="14.67" viewBox="0 0 16 16"><circle cx="8" cy="8.4" r="4.3" fill="#2f6db4"/><path d="M4.4 8.0 Q8 5.4 11.6 8.0 Q8 9.8 4.4 8.0Z" fill="#7fb0e2"/></svg>
<span id="t68" class="t " style="left:47.90px;top:32.50px;color:#000;font-size:10.7px;letter-spacing:-0.152px;">hqspi<span style="color:#a08c5e"> : QSPI_HandleTypeDef</span></span>
<svg style="left:22.27px;top:49.77px;" width="14.67" height="14.67" viewBox="0 0 16 16"><circle cx="8" cy="8.4" r="4.3" fill="#2f6db4"/><path d="M4.4 8.0 Q8 5.4 11.6 8.0 Q8 9.8 4.4 8.0Z" fill="#7fb0e2"/></svg>
<span id="t69" class="t " style="left:47.90px;top:49.00px;color:#000;font-size:10.7px;letter-spacing:-0.192px;">hspi1<span style="color:#a08c5e"> : SPI_HandleTypeDef</span></span>
<svg style="left:22.27px;top:66.27px;" width="14.67" height="14.67" viewBox="0 0 16 16"><circle cx="8" cy="8.4" r="4.3" fill="#2f6db4"/><path d="M4.4 8.0 Q8 5.4 11.6 8.0 Q8 9.8 4.4 8.0Z" fill="#7fb0e2"/></svg>
<span id="t70" class="t " style="left:47.90px;top:65.50px;color:#000;font-size:10.7px;letter-spacing:0.002px;">htim8<span style="color:#a08c5e"> : TIM_HandleTypeDef</span></span>
<svg style="left:22.27px;top:82.77px;" width="14.67" height="14.67" viewBox="0 0 16 16"><circle cx="8" cy="8.4" r="4.3" fill="#2f6db4"/><path d="M4.4 8.0 Q8 5.4 11.6 8.0 Q8 9.8 4.4 8.0Z" fill="#7fb0e2"/></svg>
<span id="t71" class="t " style="left:47.90px;top:82.00px;color:#000;font-size:10.7px;letter-spacing:-0.214px;">husart1<span style="color:#a08c5e"> : USART_HandleTypeDef</span></span>
<svg style="left:22.27px;top:99.27px;" width="14.67" height="14.67" viewBox="0 0 16 16"><circle cx="8" cy="8.4" r="4.3" fill="#2f6db4"/><path d="M4.4 8.0 Q8 5.4 11.6 8.0 Q8 9.8 4.4 8.0Z" fill="#7fb0e2"/></svg>
<span id="t72" class="t " style="left:47.90px;top:98.50px;color:#000;font-size:10.7px;letter-spacing:-0.411px;">hhcd_USB_OTG_FS<span style="color:#a08c5e"> : HCD_HandleTypeDef</span></span>
<svg style="left:22.27px;top:115.77px;" width="14.67" height="14.67" viewBox="0 0 16 16"><circle cx="8" cy="8.4" r="4.3" fill="#2f6db4"/><path d="M4.4 8.0 Q8 5.4 11.6 8.0 Q8 9.8 4.4 8.0Z" fill="#7fb0e2"/></svg>
<span id="t73" class="t " style="left:47.90px;top:115.00px;color:#000;font-size:10.7px;letter-spacing:-0.039px;">defaultTaskHandle<span style="color:#a08c5e"> : osThreadId_t</span></span>
<svg style="left:22.27px;top:132.27px;" width="14.67" height="14.67" viewBox="0 0 16 16"><circle cx="8" cy="8.4" r="4.3" fill="#2f6db4"/><path d="M4.4 8.0 Q8 5.4 11.6 8.0 Q8 9.8 4.4 8.0Z" fill="#7fb0e2"/></svg>
<span id="t74" class="t " style="left:37.40px;top:128.20px;color:#27408b;font-size:9.2px;letter-spacing:0.000px;font-weight:bold;">c</span>
<span id="t75" class="t " style="left:47.90px;top:131.50px;color:#000;font-size:10.7px;letter-spacing:0.013px;">defaultTask_attributes<span style="color:#a08c5e"> : const osThreadAttr_t</span></span>
<svg style="left:22.27px;top:148.97px;" width="14.67" height="14.67" viewBox="0 0 16 16"><path d="M2.1 9 H13.9 M4.7 5 V13 M11.3 5 V13" stroke="#2e8b47" stroke-width="1.1" fill="none"/><path d="M7.4 2.4 H8.8 M7.4 15.6 H8.8 M7.4 3.7 H8.8 M7.4 14.3 H8.8" stroke="#6fb27e" stroke-width=".8"/></svg>
<span id="t76" class="t " style="left:47.90px;top:148.00px;color:#000;font-size:10.7px;letter-spacing:0.075px;">SystemClock_Config(void)<span style="color:#a08c5e"> : void</span></span>
<svg style="left:22.27px;top:165.47px;" width="14.67" height="14.67" viewBox="0 0 16 16"><path d="M2.1 9 H13.9 M4.7 5 V13 M11.3 5 V13" stroke="#2e8b47" stroke-width="1.1" fill="none"/><path d="M7.4 2.4 H8.8 M7.4 15.6 H8.8 M7.4 3.7 H8.8 M7.4 14.3 H8.8" stroke="#6fb27e" stroke-width=".8"/></svg>
<span id="t77" class="t " style="left:47.90px;top:164.50px;color:#000;font-size:10.7px;letter-spacing:0.183px;">PeriphCommonClock_Config(void)<span style="color:#a08c5e"> : void</span></span>
<svg style="left:22.27px;top:181.97px;" width="14.67" height="14.67" viewBox="0 0 16 16"><path d="M2.1 9 H13.9 M4.7 5 V13 M11.3 5 V13" stroke="#2e8b47" stroke-width="1.1" fill="none"/><path d="M7.4 2.4 H8.8 M7.4 15.6 H8.8 M7.4 3.7 H8.8 M7.4 14.3 H8.8" stroke="#6fb27e" stroke-width=".8"/></svg>
<span id="t78" class="t " style="left:37.00px;top:177.90px;color:#dc3a52;font-size:8.4px;letter-spacing:0.000px;font-weight:bold;transform:scaleX(0.8);transform-origin:0 50%;">S</span>
<span id="t79" class="t " style="left:47.90px;top:181.00px;color:#000;font-size:10.7px;letter-spacing:-0.016px;">MX_GPIO_Init(void)<span style="color:#a08c5e"> : void</span></span>
<svg style="left:22.27px;top:198.47px;" width="14.67" height="14.67" viewBox="0 0 16 16"><path d="M2.1 9 H13.9 M4.7 5 V13 M11.3 5 V13" stroke="#2e8b47" stroke-width="1.1" fill="none"/><path d="M7.4 2.4 H8.8 M7.4 15.6 H8.8 M7.4 3.7 H8.8 M7.4 14.3 H8.8" stroke="#6fb27e" stroke-width=".8"/></svg>
<span id="t80" class="t " style="left:37.00px;top:194.40px;color:#dc3a52;font-size:8.4px;letter-spacing:0.000px;font-weight:bold;transform:scaleX(0.8);transform-origin:0 50%;">S</span>
<span id="t81" class="t " style="left:47.90px;top:197.50px;color:#000;font-size:10.7px;letter-spacing:0.023px;">MX_ADC1_Init(void)<span style="color:#a08c5e"> : void</span></span>
<svg style="left:22.27px;top:214.97px;" width="14.67" height="14.67" viewBox="0 0 16 16"><path d="M2.1 9 H13.9 M4.7 5 V13 M11.3 5 V13" stroke="#2e8b47" stroke-width="1.1" fill="none"/><path d="M7.4 2.4 H8.8 M7.4 15.6 H8.8 M7.4 3.7 H8.8 M7.4 14.3 H8.8" stroke="#6fb27e" stroke-width=".8"/></svg>
<span id="t82" class="t " style="left:37.00px;top:210.90px;color:#dc3a52;font-size:8.4px;letter-spacing:0.000px;font-weight:bold;transform:scaleX(0.8);transform-origin:0 50%;">S</span>
<span id="t83" class="t " style="left:47.90px;top:214.00px;color:#000;font-size:10.7px;letter-spacing:0.023px;">MX_DAC1_Init(void)<span style="color:#a08c5e"> : void</span></span>
<svg style="left:22.27px;top:231.47px;" width="14.67" height="14.67" viewBox="0 0 16 16"><path d="M2.1 9 H13.9 M4.7 5 V13 M11.3 5 V13" stroke="#2e8b47" stroke-width="1.1" fill="none"/><path d="M7.4 2.4 H8.8 M7.4 15.6 H8.8 M7.4 3.7 H8.8 M7.4 14.3 H8.8" stroke="#6fb27e" stroke-width=".8"/></svg>
<span id="t84" class="t " style="left:37.00px;top:227.40px;color:#dc3a52;font-size:8.4px;letter-spacing:0.000px;font-weight:bold;transform:scaleX(0.8);transform-origin:0 50%;">S</span>
<span id="t85" class="t " style="left:47.90px;top:230.50px;color:#000;font-size:10.7px;letter-spacing:0.003px;">MX_I2C1_Init(void)<span style="color:#a08c5e"> : void</span></span>
<svg style="left:22.27px;top:247.97px;" width="14.67" height="14.67" viewBox="0 0 16 16"><path d="M2.1 9 H13.9 M4.7 5 V13 M11.3 5 V13" stroke="#2e8b47" stroke-width="1.1" fill="none"/><path d="M7.4 2.4 H8.8 M7.4 15.6 H8.8 M7.4 3.7 H8.8 M7.4 14.3 H8.8" stroke="#6fb27e" stroke-width=".8"/></svg>
<span id="t86" class="t " style="left:37.00px;top:243.90px;color:#dc3a52;font-size:8.4px;letter-spacing:0.000px;font-weight:bold;transform:scaleX(0.8);transform-origin:0 50%;">S</span>
<span id="t87" class="t " style="left:47.90px;top:247.00px;color:#000;font-size:10.7px;letter-spacing:-0.058px;">MX_QUADSPI_Init(void)<span style="color:#a08c5e"> : void</span></span>
<svg style="left:22.27px;top:264.47px;" width="14.67" height="14.67" viewBox="0 0 16 16"><path d="M2.1 9 H13.9 M4.7 5 V13 M11.3 5 V13" stroke="#2e8b47" stroke-width="1.1" fill="none"/><path d="M7.4 2.4 H8.8 M7.4 15.6 H8.8 M7.4 3.7 H8.8 M7.4 14.3 H8.8" stroke="#6fb27e" stroke-width=".8"/></svg>
<span id="t88" class="t " style="left:37.00px;top:260.40px;color:#dc3a52;font-size:8.4px;letter-spacing:0.000px;font-weight:bold;transform:scaleX(0.8);transform-origin:0 50%;">S</span>
<span id="t89" class="t " style="left:47.90px;top:263.50px;color:#000;font-size:10.7px;letter-spacing:-0.057px;">MX_SPI1_Init(void)<span style="color:#a08c5e"> : void</span></span>
<svg style="left:22.27px;top:280.97px;" width="14.67" height="14.67" viewBox="0 0 16 16"><path d="M2.1 9 H13.9 M4.7 5 V13 M11.3 5 V13" stroke="#2e8b47" stroke-width="1.1" fill="none"/><path d="M7.4 2.4 H8.8 M7.4 15.6 H8.8 M7.4 3.7 H8.8 M7.4 14.3 H8.8" stroke="#6fb27e" stroke-width=".8"/></svg>
<span id="t90" class="t " style="left:37.00px;top:276.90px;color:#dc3a52;font-size:8.4px;letter-spacing:0.000px;font-weight:bold;transform:scaleX(0.8);transform-origin:0 50%;">S</span>
<span id="t91" class="t " style="left:47.90px;top:280.00px;color:#000;font-size:10.7px;letter-spacing:0.043px;">MX_TIM8_Init(void)<span style="color:#a08c5e"> : void</span></span>
<svg style="left:22.27px;top:297.47px;" width="14.67" height="14.67" viewBox="0 0 16 16"><path d="M2.1 9 H13.9 M4.7 5 V13 M11.3 5 V13" stroke="#2e8b47" stroke-width="1.1" fill="none"/><path d="M7.4 2.4 H8.8 M7.4 15.6 H8.8 M7.4 3.7 H8.8 M7.4 14.3 H8.8" stroke="#6fb27e" stroke-width=".8"/></svg>
<span id="t92" class="t " style="left:37.00px;top:293.40px;color:#dc3a52;font-size:8.4px;letter-spacing:0.000px;font-weight:bold;transform:scaleX(0.8);transform-origin:0 50%;">S</span>
<span id="t93" class="t " style="left:47.90px;top:296.50px;color:#000;font-size:10.7px;letter-spacing:-0.104px;">MX_USART1_Init(void)<span style="color:#a08c5e"> : void</span></span>
<svg style="left:22.27px;top:313.97px;" width="14.67" height="14.67" viewBox="0 0 16 16"><path d="M2.1 9 H13.9 M4.7 5 V13 M11.3 5 V13" stroke="#2e8b47" stroke-width="1.1" fill="none"/><path d="M7.4 2.4 H8.8 M7.4 15.6 H8.8 M7.4 3.7 H8.8 M7.4 14.3 H8.8" stroke="#6fb27e" stroke-width=".8"/></svg>
<span id="t94" class="t " style="left:37.00px;top:309.90px;color:#dc3a52;font-size:8.4px;letter-spacing:0.000px;font-weight:bold;transform:scaleX(0.8);transform-origin:0 50%;">S</span>
<span id="t95" class="t " style="left:47.90px;top:313.00px;color:#000;font-size:10.7px;letter-spacing:-0.318px;">MX_USB_OTG_FS_HCD_Init(void)<span style="color:#a08c5e"> : void</span></span>
<svg style="left:22.27px;top:330.47px;" width="14.67" height="14.67" viewBox="0 0 16 16"><path d="M2.1 9 H13.9 M4.7 5 V13 M11.3 5 V13" stroke="#2e8b47" stroke-width="1.1" fill="none"/><path d="M7.4 2.4 H8.8 M7.4 15.6 H8.8 M7.4 3.7 H8.8 M7.4 14.3 H8.8" stroke="#6fb27e" stroke-width=".8"/></svg>
<span id="t96" class="t " style="left:47.90px;top:329.50px;color:#000;font-size:10.7px;letter-spacing:0.081px;">StartDefaultTask(void*)<span style="color:#a08c5e"> : void</span></span>
<svg style="left:22.67px;top:346.97px;" width="14.67" height="14.67" viewBox="0 0 16 16"><circle cx="8.6" cy="8.6" r="3.1" fill="#5fae64" stroke="#2f8a45" stroke-width="1.3"/></svg>
<span id="t97" class="t " style="left:47.90px;top:346.00px;color:#000;font-size:10.7px;letter-spacing:0.260px;">main(void)<span style="color:#a08c5e"> : int</span></span>
<svg style="left:22.67px;top:363.47px;" width="14.67" height="14.67" viewBox="0 0 16 16"><circle cx="8.6" cy="8.6" r="3.1" fill="#5fae64" stroke="#2f8a45" stroke-width="1.3"/></svg>
<span id="t98" class="t " style="left:47.90px;top:362.50px;color:#000;font-size:10.7px;letter-spacing:0.075px;">SystemClock_Config(void)<span style="color:#a08c5e"> : void</span></span>
<svg style="left:22.67px;top:379.97px;" width="14.67" height="14.67" viewBox="0 0 16 16"><circle cx="8.6" cy="8.6" r="3.1" fill="#5fae64" stroke="#2f8a45" stroke-width="1.3"/></svg>
<span id="t99" class="t " style="left:47.90px;top:379.00px;color:#000;font-size:10.7px;letter-spacing:0.183px;">PeriphCommonClock_Config(void)<span style="color:#a08c5e"> : void</span></span>
<svg style="left:22.67px;top:396.47px;" width="14.67" height="14.67" viewBox="0 0 16 16"><circle cx="8.6" cy="8.6" r="3.1" fill="#5fae64" stroke="#2f8a45" stroke-width="1.3"/></svg>
<span id="t100" class="t " style="left:37.00px;top:392.40px;color:#dc3a52;font-size:8.4px;letter-spacing:0.000px;font-weight:bold;transform:scaleX(0.8);transform-origin:0 50%;">S</span>
<span id="t101" class="t " style="left:47.90px;top:395.50px;color:#000;font-size:10.7px;letter-spacing:0.023px;">MX_ADC1_Init(void)<span style="color:#a08c5e"> : void</span></span>
<svg style="left:22.67px;top:412.97px;" width="14.67" height="14.67" viewBox="0 0 16 16"><circle cx="8.6" cy="8.6" r="3.1" fill="#5fae64" stroke="#2f8a45" stroke-width="1.3"/></svg>
<span id="t102" class="t " style="left:37.00px;top:408.90px;color:#dc3a52;font-size:8.4px;letter-spacing:0.000px;font-weight:bold;transform:scaleX(0.8);transform-origin:0 50%;">S</span>
<span id="t103" class="t " style="left:47.90px;top:412.00px;color:#000;font-size:10.7px;letter-spacing:0.023px;">MX_DAC1_Init(void)<span style="color:#a08c5e"> : void</span></span>
<svg style="left:22.67px;top:429.46px;" width="14.67" height="14.67" viewBox="0 0 16 16"><circle cx="8.6" cy="8.6" r="3.1" fill="#5fae64" stroke="#2f8a45" stroke-width="1.3"/></svg>
<span id="t104" class="t " style="left:37.00px;top:425.40px;color:#dc3a52;font-size:8.4px;letter-spacing:0.000px;font-weight:bold;transform:scaleX(0.8);transform-origin:0 50%;">S</span>
<span id="t105" class="t " style="left:47.90px;top:428.50px;color:#000;font-size:10.7px;letter-spacing:0.003px;">MX_I2C1_Init(void)<span style="color:#a08c5e"> : void</span></span>
<svg style="left:22.67px;top:445.96px;" width="14.67" height="14.67" viewBox="0 0 16 16"><circle cx="8.6" cy="8.6" r="3.1" fill="#5fae64" stroke="#2f8a45" stroke-width="1.3"/></svg>
<span id="t106" class="t " style="left:37.00px;top:441.90px;color:#dc3a52;font-size:8.4px;letter-spacing:0.000px;font-weight:bold;transform:scaleX(0.8);transform-origin:0 50%;">S</span>
<span id="t107" class="t " style="left:47.90px;top:445.00px;color:#000;font-size:10.7px;letter-spacing:-0.058px;">MX_QUADSPI_Init(void)<span style="color:#a08c5e"> : void</span></span>
<svg style="left:22.67px;top:462.46px;" width="14.67" height="14.67" viewBox="0 0 16 16"><circle cx="8.6" cy="8.6" r="3.1" fill="#5fae64" stroke="#2f8a45" stroke-width="1.3"/></svg>
<span id="t108" class="t " style="left:37.00px;top:458.40px;color:#dc3a52;font-size:8.4px;letter-spacing:0.000px;font-weight:bold;transform:scaleX(0.8);transform-origin:0 50%;">S</span>
<span id="t109" class="t " style="left:47.90px;top:461.50px;color:#000;font-size:10.7px;letter-spacing:-0.057px;">MX_SPI1_Init(void)<span style="color:#a08c5e"> : void</span></span>
<svg style="left:22.67px;top:478.96px;" width="14.67" height="14.67" viewBox="0 0 16 16"><circle cx="8.6" cy="8.6" r="3.1" fill="#5fae64" stroke="#2f8a45" stroke-width="1.3"/></svg>
<span id="t110" class="t " style="left:37.00px;top:474.90px;color:#dc3a52;font-size:8.4px;letter-spacing:0.000px;font-weight:bold;transform:scaleX(0.8);transform-origin:0 50%;">S</span>
<span id="t111" class="t " style="left:47.90px;top:478.00px;color:#000;font-size:10.7px;letter-spacing:0.043px;">MX_TIM8_Init(void)<span style="color:#a08c5e"> : void</span></span>
<svg style="left:22.67px;top:495.46px;" width="14.67" height="14.67" viewBox="0 0 16 16"><circle cx="8.6" cy="8.6" r="3.1" fill="#5fae64" stroke="#2f8a45" stroke-width="1.3"/></svg>
<span id="t112" class="t " style="left:37.00px;top:491.40px;color:#dc3a52;font-size:8.4px;letter-spacing:0.000px;font-weight:bold;transform:scaleX(0.8);transform-origin:0 50%;">S</span>
<span id="t113" class="t " style="left:47.90px;top:494.50px;color:#000;font-size:10.7px;letter-spacing:-0.104px;">MX_USART1_Init(void)<span style="color:#a08c5e"> : void</span></span>
<svg style="left:22.67px;top:511.96px;" width="14.67" height="14.67" viewBox="0 0 16 16"><circle cx="8.6" cy="8.6" r="3.1" fill="#5fae64" stroke="#2f8a45" stroke-width="1.3"/></svg>
<span id="t114" class="t " style="left:37.00px;top:507.90px;color:#dc3a52;font-size:8.4px;letter-spacing:0.000px;font-weight:bold;transform:scaleX(0.8);transform-origin:0 50%;">S</span>
<span id="t115" class="t " style="left:47.90px;top:511.00px;color:#000;font-size:10.7px;letter-spacing:-0.318px;">MX_USB_OTG_FS_HCD_Init(void)<span style="color:#a08c5e"> : void</span></span>
<svg style="left:22.67px;top:528.46px;" width="14.67" height="14.67" viewBox="0 0 16 16"><circle cx="8.6" cy="8.6" r="3.1" fill="#5fae64" stroke="#2f8a45" stroke-width="1.3"/></svg>
<span id="t116" class="t " style="left:37.00px;top:524.40px;color:#dc3a52;font-size:8.4px;letter-spacing:0.000px;font-weight:bold;transform:scaleX(0.8);transform-origin:0 50%;">S</span>
<span id="t117" class="t " style="left:47.90px;top:527.50px;color:#000;font-size:10.7px;letter-spacing:-0.016px;">MX_GPIO_Init(void)<span style="color:#a08c5e"> : void</span></span>
<div style="left:20.90px;top:544.20px;width:167.00px;height:16.30px;background:#d9d9d9;"></div>
<svg style="left:22.67px;top:544.96px;" width="14.67" height="14.67" viewBox="0 0 16 16"><circle cx="8.6" cy="8.6" r="3.1" fill="#5fae64" stroke="#2f8a45" stroke-width="1.3"/></svg>
<span id="t118" class="t " style="left:47.90px;top:544.00px;color:#000;font-size:10.7px;letter-spacing:0.081px;">StartDefaultTask(void*) : void</span>
<svg style="left:22.67px;top:561.46px;" width="14.67" height="14.67" viewBox="0 0 16 16"><circle cx="8.6" cy="8.6" r="3.1" fill="#5fae64" stroke="#2f8a45" stroke-width="1.3"/></svg>
<span id="t119" class="t " style="left:47.90px;top:560.50px;color:#000;font-size:10.7px;letter-spacing:0.018px;">Error_Handler(void)<span style="color:#a08c5e"> : void</span></span>
<svg style="left:22.67px;top:577.96px;" width="14.67" height="14.67" viewBox="0 0 16 16"><circle cx="8.6" cy="8.6" r="3.1" fill="#86c08a" stroke="#5fa06c" stroke-width="1.3"/><path d="M1.6 13.6 L14.6 2.6" stroke="#8a8a8a" stroke-width="1.1"/></svg>
<span id="t120" class="t " style="left:47.90px;top:577.00px;color:#a0a0a0;font-size:10.7px;letter-spacing:0.012px;">assert_failed(uint8_t*, uint32_t) : void</span>
</div>
<div style="left:1745.30px;top:89.00px;width:13.00px;height:591.20px;background:#f0f0f0;"></div>
<div style="left:1745.30px;top:160.00px;width:13.00px;height:488.30px;background:#cdcdcd;"></div>
<svg style="left:1745.80px;top:91.60px" width="12" height="12" viewBox="-6 -6 12 12"><path d="M-3.2 1.6 L0 -1.6 L3.2 1.6" fill="none" stroke="#606060" stroke-width="1.6"/></svg>
<svg style="left:1745.80px;top:665.00px" width="12" height="12" viewBox="-6 -6 12 12"><path d="M-3.2 -1.6 L0 1.6 L3.2 -1.6" fill="none" stroke="#606060" stroke-width="1.6"/></svg>
<div style="left:1426.60px;top:680.20px;width:332.40px;height:13.20px;background:#f0f0f0;"></div>
<div style="left:1441.80px;top:680.20px;width:264.90px;height:13.20px;background:#cdcdcd;"></div>
<svg style="left:1428.00px;top:680.80px" width="12" height="12" viewBox="-6 -6 12 12"><path d="M1.6 -3.2 L-1.6 0 L1.6 3.2" fill="none" stroke="#404040" stroke-width="1.6"/></svg>
<svg style="left:1730.20px;top:680.80px" width="12" height="12" viewBox="-6 -6 12 12"><path d="M-1.6 -3.2 L1.6 0 L-1.6 3.2" fill="none" stroke="#404040" stroke-width="1.6"/></svg>
<div style="left:414.90px;top:699.50px;width:1345.10px;height:229.50px;background:#fff;border:1px solid #dcdcdc;box-sizing:border-box;"></div>
<div style="left:414.90px;top:699.50px;width:1345.10px;height:23.20px;background:#e6e6e6;border:1px solid #dcdcdc;border-bottom-color:#dadada;box-sizing:border-box;"></div>
<div style="left:540.90px;top:700.30px;width:85.40px;height:22.40px;background:#f4f4f4;border-left:1px solid #dcdcdc;border-right:1px solid #dcdcdc;box-sizing:border-box;"></div>
<svg style="left:418.27px;top:703.97px;" width="14.67" height="14.67" viewBox="0 0 16 16"><path d="M1 1.2 H10.4 Q13.6 1.2 13.8 4 Q12.2 8.4 14.2 14.8 H1Z" fill="#fbfcfe" stroke="#8e98b6" stroke-width="1"/><path d="M9.4 1.8 H10.6 Q12.8 2 13 4 Q11.6 8.4 13.4 14.2 H9.4Z" fill="#dfeaf8"/><path d="M9.2 1.6 V14.4 M1.4 8 H12.4" stroke="#a4b8d6" stroke-width=".8"/><path d="M1 1.2 H10.4" stroke="#c0a878" stroke-width="1"/><circle cx="5.2" cy="4.6" r="2.5" fill="#dc2c40"/><path d="M2.8 14.3 V12.8 Q2.8 10.2 5.3 10.2 Q7.8 10.2 7.8 12.8 V14.3Z" fill="#f2aa3e"/></svg>
<span id="t121" class="t " style="left:437.30px;top:703.20px;color:#000;font-size:10.7px;letter-spacing:0.032px;">Problems</span>
<svg style="left:491.97px;top:704.26px;" width="14.67" height="14.67" viewBox="0 0 16 16"><rect x="3.6" y="3" width="10.6" height="12" rx="1" fill="#f3e2bc" stroke="#c59a4e" stroke-width="1"/><rect x="5" y="4.6" width="7.8" height="9" fill="#fbfbf6"/><rect x="6.6" y="1.2" width="4.6" height="2.8" rx=".8" fill="#a8b0bc" stroke="#78808c" stroke-width=".7"/><path d="M8.4 7.4 H12 M8.4 9.6 H12 M8.4 11.8 H12" stroke="#8a9ab4" stroke-width=".9"/><path d="M1 9.6 L3.6 12.4 L8 6.4" stroke="#2f72cc" stroke-width="1.9" fill="none"/></svg>
<span id="t122" class="t " style="left:510.70px;top:703.20px;color:#000;font-size:10.7px;letter-spacing:-0.566px;">Tasks</span>
<svg style="left:545.16px;top:704.26px;" width="14.67" height="14.67" viewBox="0 0 16 16"><rect x="1.4" y="1.6" width="13.2" height="10" rx="1.4" fill="#eef4fc" stroke="#2f62b0" stroke-width="1.7"/><path d="M4 5.2 H11 M4 7.8 H8.6" stroke="#3b5a8c" stroke-width="1.1"/><path d="M4.4 14.4 H11.6 M6.4 11.8 V14 M9.6 11.8 V14" stroke="#2f62b0" stroke-width="1.5"/></svg>
<span id="t123" class="t " style="left:562.60px;top:703.20px;color:#000;font-size:10.7px;letter-spacing:0.054px;">Console</span>
<svg style="left:608.70px;top:706.00px" width="12" height="12" viewBox="-6 -6 12 12"><path d="M-4.3 -4.3 L4.3 4.3 M4.3 -4.3 L-4.3 4.3" fill="none" stroke="#3a3a3a" stroke-width="1.0"/></svg>
<svg style="left:630.06px;top:704.26px;" width="14.67" height="14.67" viewBox="0 0 16 16"><rect x="1.4" y="1.8" width="13.2" height="12.4" fill="#fbfcfe" stroke="#6a6a72" stroke-width="1"/><rect x="1.9" y="2.3" width="12.2" height="2.6" fill="#c8d8ee"/><path d="M5.6 2 V14 M2 5.2 H14.4 M2 8.2 H14.4 M2 11.2 H14.4" stroke="#8a9ab4" stroke-width=".8"/></svg>
<span id="t124" class="t " style="left:648.00px;top:703.20px;color:#000;font-size:10.7px;letter-spacing:-0.012px;">Properties</span>
<div style="left:1574.90px;top:701.10px;width:21.20px;height:18.80px;background:#cce4f7;border:1px solid #9ccbf2;box-sizing:border-box;"></div>
<div style="left:1596.10px;top:701.10px;width:21.00px;height:18.80px;background:#cce4f7;border:1px solid #9ccbf2;box-sizing:border-box;"></div>
<svg style="left:1444.07px;top:703.66px;" width="14.67" height="14.67" viewBox="0 0 16 16"><rect x="2.6" y="2.8" width="10.8" height="10.8" rx="1.8" fill="#bcbcbc" stroke="#c8c8c8" stroke-width="1"/><rect x="4.6" y="4.8" width="6.8" height="6.8" rx="1" fill="#b2b2b2"/></svg>
<svg style="left:1465.26px;top:703.66px;" width="14.67" height="14.67" viewBox="0 0 16 16"><path d="M3.2 3.2 L12.8 12.8 M12.8 3.2 L3.2 12.8" stroke="#6c6c6c" stroke-width="3.7" stroke-linecap="round"/></svg>
<svg style="left:1486.26px;top:703.66px;" width="14.67" height="14.67" viewBox="0 0 16 16"><path d="M2 2 L9.4 9.4 M9.4 2 L2 9.4" stroke="#7c7c7c" stroke-width="2.8" stroke-linecap="round" stroke-dasharray="2.2 1.1"/><path d="M7 7 L14 14 M14 7 L7 14" stroke="#6c6c6c" stroke-width="3.3" stroke-linecap="round"/></svg>
<svg style="left:1514.26px;top:703.66px;" width="14.67" height="14.67" viewBox="0 0 16 16"><path d="M2.5 1.5 H8.6 L11.5 4.4 V13 H2.5Z" fill="#fbf7ec" stroke="#c0a878" stroke-width="1"/><path d="M4 5 H9 M4 7 H10 M4 9 H9 M4 11 H8" stroke="#6f8fc0" stroke-width=".9"/><path d="M9.6 10 L14.4 14.8 M14.4 10 L9.6 14.8" stroke="#7a7a7a" stroke-width="2"/></svg>
<svg style="left:1535.46px;top:703.66px;" width="14.67" height="14.67" viewBox="0 0 16 16"><rect x="5" y="1.5" width="9.5" height="12" fill="#e9f2fc" stroke="#7a9acb" stroke-width="1"/><rect x="11.4" y="2" width="2.6" height="11" fill="#9dc0ea"/><path d="M6.4 4 H10 M6.4 6 H10" stroke="#6f8fc0" stroke-width=".9"/><rect x="1.2" y="9" width="7.8" height="6" rx=".8" fill="#f2b648" stroke="#b87e1e" stroke-width=".9"/><path d="M3 9 V7.4 Q3 5.4 5.1 5.4 Q7.2 5.4 7.2 7.4 V9" fill="none" stroke="#b87e1e" stroke-width="1.2"/></svg>
<svg style="left:1556.66px;top:703.66px;" width="14.67" height="14.67" viewBox="0 0 16 16"><rect x="1.5" y="1.5" width="9.6" height="11.6" fill="#fbf7ec" stroke="#c0a878" stroke-width="1"/><path d="M3 4.4 H9 M3 6.6 H8 M3 8.8 H9 M3 11 H6.4" stroke="#6f8fc0" stroke-width=".9"/><path d="M14 4.4 V11.2 H9 M11 8.8 L8.6 11.2 L11 13.6" fill="none" stroke="#c98a26" stroke-width="2.6"/><path d="M14 4.4 V11.2 H9 M11 8.8 L8.6 11.2 L11 13.6" fill="none" stroke="#fbd878" stroke-width="1.1"/></svg>
<svg style="left:1578.16px;top:703.66px;" width="14.67" height="14.67" viewBox="0 0 16 16"><rect x="4.8" y="2" width="10.6" height="8" rx="1.2" fill="#fafcff" stroke="#5a86c6" stroke-width="1"/><path d="M6.8 4.6 H13.6 M6.8 6.8 H12" stroke="#2f4f8c" stroke-width="1"/><rect x="1.2" y="8" width="6.6" height="5" rx=".8" fill="#dfe8f6" stroke="#2f5fa8" stroke-width="1.3"/><path d="M2.6 15 H6.4 M4.5 13.2 V14.8" stroke="#2f5fa8" stroke-width="1.4"/></svg>
<svg style="left:1599.16px;top:703.66px;" width="14.67" height="14.67" viewBox="0 0 16 16"><rect x="4.8" y="2" width="10.6" height="8" rx="1.2" fill="#fafcff" stroke="#5a86c6" stroke-width="1"/><path d="M6.8 3.6 L10.4 7.8 M10.4 3.6 L6.8 7.8" stroke="#e0283c" stroke-width="1.7"/><path d="M11.8 4.6 H14 M11.8 6.8 H14" stroke="#7a9acb" stroke-width=".9"/><rect x="1.2" y="8" width="6.6" height="5" rx=".8" fill="#dfe8f6" stroke="#2f5fa8" stroke-width="1.3"/><path d="M2.6 15 H6.4 M4.5 13.2 V14.8" stroke="#2f5fa8" stroke-width="1.4"/></svg>
<svg style="left:1628.07px;top:703.66px;" width="14.67" height="14.67" viewBox="0 0 16 16"><rect x="1.2" y="5" width="12.6" height="9.8" fill="#f4f8fd" stroke="#6a7c98" stroke-width="1"/><rect x="1.7" y="5.5" width="11.6" height="2.6" fill="#2f6fd0"/><path d="M8.6 8.8 L11 5.6" stroke="#4a4a4a" stroke-width="1"/><path d="M9.6 3.6 L12.8 0.8 L15.4 3.4 L12.4 6.4Z" fill="#3fa24e" stroke="#237a36" stroke-width=".8"/></svg>
<svg style="left:1649.87px;top:703.66px;" width="14.67" height="14.67" viewBox="0 0 16 16"><rect x="1.4" y="1.4" width="13.2" height="10.4" rx="1.4" fill="#eef4fc" stroke="#2f62b0" stroke-width="1.8"/><path d="M4 5 H11 M4 7.6 H8.6" stroke="#3b5a8c" stroke-width="1.1"/><path d="M4.4 14.6 H11.6 M6.4 12 V14.2 M9.6 12 V14.2" stroke="#2f62b0" stroke-width="1.5"/></svg>
<svg style="left:1684.16px;top:703.66px;" width="14.67" height="14.67" viewBox="0 0 16 16"><rect x="1" y="3.3" width="13.2" height="11.4" fill="#fdfaf0" stroke="#b98a46" stroke-width="1"/><rect x="1.5" y="3.8" width="12.2" height="2.4" fill="#4a8fdc"/><path d="M5 13.6 Q10 13 12.4 7.4" stroke="#f5dfae" stroke-width="1.4" fill="none"/><path d="M12.4 0.6 L15.4 4.2 L12.4 7.8 L9.4 4.2Z" fill="#fff3d6" stroke="#d9962f" stroke-width="1.1"/><path d="M12.4 2.2 V6.2 M10.9 4.2 H13.9" stroke="#f0b858" stroke-width="0.8"/></svg>
<div style="left:1506.00px;top:703.00px;width:1.00px;height:16.00px;background:#a0a0a0;"></div>
<div style="left:1619.20px;top:703.00px;width:1.00px;height:16.00px;background:#a0a0a0;"></div>
<svg style="left:1669.00px;top:708.20px" width="8" height="6" viewBox="0 0 8 6"><path d="M0.6 1.2 L7.4 1.2 L4 4.9 Z" fill="#1a1a1a"/></svg>
<svg style="left:1704.60px;top:708.20px" width="8" height="6" viewBox="0 0 8 6"><path d="M0.6 1.2 L7.4 1.2 L4 4.9 Z" fill="#1a1a1a"/></svg>
<svg style="left:1719.40px;top:704.40px" width="12" height="8" viewBox="-6 -4 12 8"><rect x="-4.6" y="-1.6" width="9.2" height="3.2" rx="0.8" fill="#fff" stroke="#2a2a2a" stroke-width="1.2"/></svg>
<svg style="left:1740.60px;top:705.00px" width="12" height="12" viewBox="-6 -6 12 12"><rect x="-4.4" y="-4.4" width="8.8" height="8.8" rx="0.8" fill="#fff" stroke="#2a2a2a" stroke-width="1.2"/><rect x="-4.4" y="-4.6" width="8.8" height="2.4" fill="#2a2a2a"/></svg>
<div style="left:415.90px;top:722.70px;width:1343.10px;height:15.00px;background:#f0f0f0;"></div>
<span id="t125" class="t " style="left:416.40px;top:722.40px;color:#000;font-size:10.7px;letter-spacing:-0.054px;">&lt;terminated&gt; RTOS Proxy</span>
<div style="left:415.90px;top:736.80px;width:1343.10px;height:1.20px;background:#c6c6c6;"></div>
<span class="m" style="left:417.50px;top:739.80px;">STMicroelectronics RTOS Proxy. Version 0.12.0</span>
<span class="m" style="left:417.50px;top:753.55px;">Copyright (c) 2022, STMicroelectronics. All rights reserved.</span>
<span class="m" style="left:417.50px;top:781.05px;">Loading RTOS driver... FreeRTOS</span>
<span class="m" style="left:417.50px;top:794.80px;">Connecting to GDB server 127.0.0.1 on port 61234 ... Connected</span>
<span class="m" style="left:417.50px;top:808.55px;">Listen for GDB connection on port: 60000 ... Connected</span>
<span class="m" style="left:417.50px;top:822.30px;">Lost connection to GDB Client</span>
<span class="m" style="left:417.50px;top:836.05px;">Proxy stopped.</span>
<div style="left:1745.30px;top:738.00px;width:13.00px;height:176.50px;background:#f0f0f0;"></div>
<svg style="left:1745.80px;top:740.60px" width="12" height="12" viewBox="-6 -6 12 12"><path d="M-3.2 1.6 L0 -1.6 L3.2 1.6" fill="none" stroke="#c4c4c4" stroke-width="1.6"/></svg>
<svg style="left:1745.80px;top:900.30px" width="12" height="12" viewBox="-6 -6 12 12"><path d="M-3.2 -1.6 L0 1.6 L3.2 -1.6" fill="none" stroke="#c4c4c4" stroke-width="1.6"/></svg>
<div style="left:415.90px;top:914.50px;width:1343.10px;height:13.50px;background:#f0f0f0;"></div>
<svg style="left:416.50px;top:915.40px" width="12" height="12" viewBox="-6 -6 12 12"><path d="M1.6 -3.2 L-1.6 0 L1.6 3.2" fill="none" stroke="#c4c4c4" stroke-width="1.6"/></svg>
<svg style="left:1731.00px;top:915.40px" width="12" height="12" viewBox="-6 -6 12 12"><path d="M-1.6 -3.2 L1.6 0 L-1.6 3.2" fill="none" stroke="#c4c4c4" stroke-width="1.6"/></svg>
<div style="left:0.00px;top:929.00px;width:1761.00px;height:25.00px;background:#f0f0f0;"></div>
<div style="left:1143.80px;top:932.00px;width:1.00px;height:18.50px;background:#a8a8a8;"></div>
<div style="left:1266.50px;top:932.00px;width:1.00px;height:18.50px;background:#a8a8a8;"></div>
<div style="left:1384.00px;top:932.00px;width:1.00px;height:18.50px;background:#a8a8a8;"></div>
<span id="t126" class="t " style="left:1151.40px;top:932.40px;color:#000;font-size:10.7px;letter-spacing:0.246px;">Writable</span>
<span id="t127" class="t " style="left:1274.20px;top:932.40px;color:#000;font-size:10.7px;letter-spacing:0.034px;">Smart Insert</span>
<span id="t128" class="t " style="left:1391.70px;top:932.40px;color:#000;font-size:10.7px;letter-spacing:-0.373px;">702 : 13 : 18967</span>
<div style="left:1499.70px;top:934.60px;width:1.60px;height:1.60px;background:#b8b8b8;"></div>
<div style="left:1499.70px;top:938.24px;width:1.60px;height:1.60px;background:#b8b8b8;"></div>
<div style="left:1499.70px;top:941.88px;width:1.60px;height:1.60px;background:#b8b8b8;"></div>
<div style="left:1499.70px;top:945.52px;width:1.60px;height:1.60px;background:#b8b8b8;"></div>
<div style="left:539.40px;top:337.00px;width:381.20px;height:224.40px;background:#fff;border:1px solid #9a9a9a;box-sizing:border-box;box-shadow:2px 3px 7px rgba(0,0,0,0.35);"></div>
<div style="left:540.40px;top:338.00px;width:364.60px;height:196.30px;overflow:hidden;">
<svg style="left:3.27px;top:6.47px;" width="14.67" height="14.67" viewBox="0 0 16 16"><circle cx="8.6" cy="8.6" r="3.1" fill="#5fae64" stroke="#2f8a45" stroke-width="1.3"/></svg>
<span id="t129" class="t " style="left:20.40px;top:5.80px;color:#000;font-size:10.7px;letter-spacing:-0.202px;">HAL_GPIO_DeInit(GPIO_TypeDef * GPIOx, uint32_t GPIO_Pin) : void</span>
<svg style="left:3.27px;top:23.88px;" width="14.67" height="14.67" viewBox="0 0 16 16"><circle cx="8.6" cy="8.6" r="3.1" fill="#5fae64" stroke="#2f8a45" stroke-width="1.3"/></svg>
<span id="t130" class="t " style="left:20.40px;top:23.22px;color:#000;font-size:10.7px;letter-spacing:-0.268px;">HAL_GPIO_EXTI_Callback(uint16_t GPIO_Pin) : void</span>
<svg style="left:3.27px;top:41.30px;" width="14.67" height="14.67" viewBox="0 0 16 16"><circle cx="8.6" cy="8.6" r="3.1" fill="#5fae64" stroke="#2f8a45" stroke-width="1.3"/></svg>
<span id="t131" class="t " style="left:20.40px;top:40.63px;color:#000;font-size:10.7px;letter-spacing:-0.272px;">HAL_GPIO_EXTI_IRQHandler(uint16_t GPIO_Pin) : void</span>
<svg style="left:3.27px;top:58.72px;" width="14.67" height="14.67" viewBox="0 0 16 16"><circle cx="8.6" cy="8.6" r="3.1" fill="#5fae64" stroke="#2f8a45" stroke-width="1.3"/></svg>
<span id="t132" class="t " style="left:20.40px;top:58.05px;color:#000;font-size:10.7px;letter-spacing:-0.186px;">HAL_GPIO_Init(GPIO_TypeDef * GPIOx, GPIO_InitTypeDef * GPIO_Init) : void</span>
<svg style="left:3.27px;top:76.13px;" width="14.67" height="14.67" viewBox="0 0 16 16"><circle cx="8.6" cy="8.6" r="3.1" fill="#5fae64" stroke="#2f8a45" stroke-width="1.3"/></svg>
<span id="t133" class="t " style="left:20.40px;top:75.47px;color:#000;font-size:10.7px;letter-spacing:-0.240px;">HAL_GPIO_LockPin(GPIO_TypeDef * GPIOx, uint16_t GPIO_Pin) : HAL_StatusTypeDef</span>
<svg style="left:3.27px;top:93.55px;" width="14.67" height="14.67" viewBox="0 0 16 16"><circle cx="8.6" cy="8.6" r="3.1" fill="#5fae64" stroke="#2f8a45" stroke-width="1.3"/></svg>
<span id="t134" class="t " style="left:20.40px;top:92.89px;color:#000;font-size:10.7px;letter-spacing:-0.282px;">HAL_GPIO_ReadPin(GPIO_TypeDef * GPIOx, uint16_t GPIO_Pin) : GPIO_PinState</span>
<div style="left:3.60px;top:110.00px;width:361.00px;height:16.80px;background:#e3f1fe;"></div>
<div style="left:18.10px;top:110.00px;width:345.50px;height:16.80px;background:#cce8ff;"></div>
<svg style="left:3.27px;top:110.97px;" width="14.67" height="14.67" viewBox="0 0 16 16"><circle cx="8.6" cy="8.6" r="3.1" fill="#5fae64" stroke="#2f8a45" stroke-width="1.3"/></svg>
<span id="t135" class="t " style="left:20.40px;top:110.30px;color:#000;font-size:10.7px;letter-spacing:-0.176px;">HAL_GPIO_TogglePin(GPIO_TypeDef * GPIOx, uint16_t GPIO_Pin) : void</span>
<svg style="left:3.27px;top:128.38px;" width="14.67" height="14.67" viewBox="0 0 16 16"><circle cx="8.6" cy="8.6" r="3.1" fill="#5fae64" stroke="#2f8a45" stroke-width="1.3"/></svg>
<span id="t136" class="t " style="left:20.40px;top:127.72px;color:#000;font-size:10.7px;letter-spacing:-0.204px;">HAL_GPIO_WritePin(GPIO_TypeDef * GPIOx, uint16_t GPIO_Pin, GPIO_PinState PinState) : void</span>
<span id="t137" class="t " style="left:5.90px;top:145.54px;color:#2f5890;font-size:14.2px;letter-spacing:0.000px;font-weight:bold;font-style:italic;">#</span>
<span id="t138" class="t " style="left:20.40px;top:145.14px;color:#000;font-size:10.7px;letter-spacing:-0.542px;">HAL_GPIO_MODULE_ENABLED</span>
<span id="t139" class="t " style="left:5.90px;top:162.95px;color:#2f5890;font-size:14.2px;letter-spacing:0.000px;font-weight:bold;font-style:italic;">#</span>
<span id="t140" class="t " style="left:20.40px;top:162.55px;color:#000;font-size:10.7px;letter-spacing:-0.579px;">HAL_DMAMUX1_REQUEST_GEN_LPTIM1_OUT</span>
<span id="t141" class="t " style="left:5.90px;top:180.37px;color:#2f5890;font-size:14.2px;letter-spacing:0.000px;font-weight:bold;font-style:italic;">#</span>
<span id="t142" class="t " style="left:20.40px;top:179.97px;color:#000;font-size:10.7px;letter-spacing:-0.579px;">HAL_DMAMUX1_REQUEST_GEN_LPTIM2_OUT</span>
</div>
<div style="left:905.00px;top:338.00px;width:14.60px;height:196.30px;background:#f0f0f0;"></div>
<div style="left:905.00px;top:359.00px;width:14.60px;height:144.20px;background:#cdcdcd;"></div>
<svg style="left:906.20px;top:345.00px" width="12" height="12" viewBox="-6 -6 12 12"><path d="M-3.2 1.6 L0 -1.6 L3.2 1.6" fill="none" stroke="#404040" stroke-width="1.6"/></svg>
<svg style="left:906.20px;top:520.00px" width="12" height="12" viewBox="-6 -6 12 12"><path d="M-3.2 -1.6 L0 1.6 L3.2 -1.6" fill="none" stroke="#404040" stroke-width="1.6"/></svg>
<div style="left:540.40px;top:534.30px;width:364.60px;height:13.00px;background:#f0f0f0;"></div>
<div style="left:555.40px;top:534.30px;width:256.80px;height:13.00px;background:#cdcdcd;"></div>
<div style="left:905.00px;top:534.30px;width:14.60px;height:13.00px;background:#f0f0f0;"></div>
<svg style="left:541.80px;top:534.80px" width="12" height="12" viewBox="-6 -6 12 12"><path d="M1.6 -3.2 L-1.6 0 L1.6 3.2" fill="none" stroke="#404040" stroke-width="1.6"/></svg>
<svg style="left:890.70px;top:534.80px" width="12" height="12" viewBox="-6 -6 12 12"><path d="M-1.6 -3.2 L1.6 0 L-1.6 3.2" fill="none" stroke="#404040" stroke-width="1.6"/></svg>
<span id="t143" class="t " style="left:699.30px;top:547.80px;color:#000;font-size:10.7px;letter-spacing:-0.142px;">Press 'Ctrl+Space' to show Template Proposals</span>
</div>
</body></html>
